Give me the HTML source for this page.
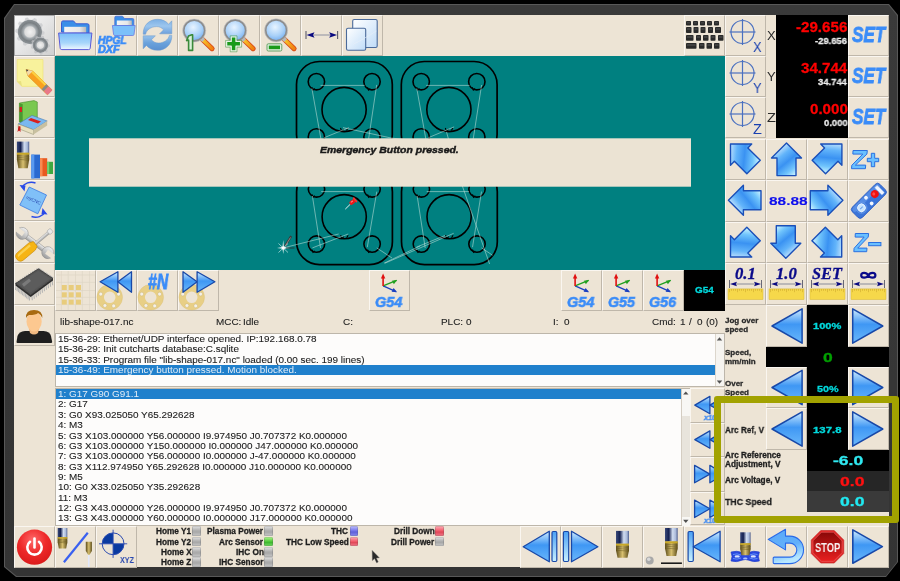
<!DOCTYPE html>
<html><head><meta charset="utf-8"><style>
html,body{margin:0;padding:0;width:900px;height:581px;overflow:hidden;background:#000;}
body{position:relative;font-family:"Liberation Sans",sans-serif;}
.a{position:absolute;}
.b{position:absolute;box-sizing:border-box;border-left:1px solid #faf6f0;border-top:1px solid #faf6f0;border-right:1px solid #bfb7aa;border-bottom:1px solid #bfb7aa;overflow:hidden;background:#ede4d5;}
.b svg{position:absolute;left:-1px;top:-1px;}
.t{position:absolute;white-space:nowrap;color:#222;line-height:1;will-change:transform;}
</style></head><body>
<div class="a" style="left:4px;top:4px;width:894px;height:573px;background:#585858;clip-path:polygon(10px 0,885px 0,894px 11px,894px 558px,882px 573px,12px 573px,0 563px,0 14px);"></div>
<div class="a" style="left:5px;top:5px;width:892px;height:571px;background:linear-gradient(#3a3a3a,#343434);clip-path:polygon(9.5px 0,883.5px 0,892px 10.5px,892px 557px,881px 571px,11.5px 571px,0 561.5px,0 13.5px);"></div>
<div class="a" style="left:14px;top:15px;width:875px;height:552px;background:#ede4d5;"></div>
<div class="b" style="left:14px;top:15px;width:41px;height:41px;background:linear-gradient(135deg,#fbfbfb,#d0d0d0);border-color:#a8a8a8;"></div>
<div class="b" style="left:55px;top:15px;width:41px;height:41px;"></div>
<div class="b" style="left:96px;top:15px;width:41px;height:41px;"></div>
<div class="b" style="left:137px;top:15px;width:41px;height:41px;"></div>
<div class="b" style="left:178px;top:15px;width:41px;height:41px;"></div>
<div class="b" style="left:219px;top:15px;width:41px;height:41px;"></div>
<div class="b" style="left:260px;top:15px;width:41px;height:41px;"></div>
<div class="b" style="left:301px;top:15px;width:41px;height:41px;"></div>
<div class="b" style="left:342px;top:15px;width:41px;height:41px;"></div>
<div class="b" style="left:684px;top:15px;width:41px;height:41px;"></div>
<div class="b" style="left:14px;top:56px;width:41px;height:41px;"></div>
<div class="b" style="left:14px;top:97px;width:41px;height:41px;"></div>
<div class="b" style="left:14px;top:138px;width:41px;height:42px;"></div>
<div class="b" style="left:14px;top:180px;width:41px;height:41px;"></div>
<div class="b" style="left:14px;top:221px;width:41px;height:42px;"></div>
<div class="b" style="left:14px;top:263px;width:41px;height:42px;"></div>
<div class="b" style="left:14px;top:305px;width:41px;height:41px;"></div>
<div class="a" style="left:55px;top:56px;width:670px;height:214px;background:#008080;overflow:hidden;"></div>
<div class="b" style="left:55px;top:270px;width:41px;height:41px;"></div>
<div class="b" style="left:96px;top:270px;width:41px;height:41px;"></div>
<div class="b" style="left:137px;top:270px;width:41px;height:41px;"></div>
<div class="b" style="left:178px;top:270px;width:41px;height:41px;"></div>
<div class="b" style="left:369px;top:270px;width:41px;height:41px;"></div>
<div class="b" style="left:561px;top:270px;width:41px;height:41px;"></div>
<div class="b" style="left:602px;top:270px;width:41px;height:41px;"></div>
<div class="b" style="left:643px;top:270px;width:41px;height:41px;"></div>
<div class="a" style="left:684px;top:270px;width:41px;height:41px;background:#000;"></div>
<div class="t" style="left:59.85px;top:318.01px;font-size:9.29px;font-weight:normal;font-style:normal;color:#222222;transform:scaleX(1.0690);transform-origin:0 0;-webkit-text-stroke:0.1px #222222;">lib-shape-017.nc</div>
<div class="t" style="left:216.01px;top:318.01px;font-size:9.29px;font-weight:normal;font-style:normal;color:#222222;transform:scaleX(1.0690);transform-origin:0 0;-webkit-text-stroke:0.1px #222222;">MCC:</div>
<div class="t" style="left:243.01px;top:318.01px;font-size:9.29px;font-weight:normal;font-style:normal;color:#222222;transform:scaleX(1.0690);transform-origin:0 0;-webkit-text-stroke:0.1px #222222;">Idle</div>
<div class="t" style="left:342.50px;top:318.01px;font-size:9.29px;font-weight:normal;font-style:normal;color:#222222;transform:scaleX(1.0690);transform-origin:0 0;-webkit-text-stroke:0.1px #222222;">C:</div>
<div class="t" style="left:441.41px;top:318.01px;font-size:9.29px;font-weight:normal;font-style:normal;color:#222222;transform:scaleX(1.0690);transform-origin:0 0;-webkit-text-stroke:0.1px #222222;">PLC:</div>
<div class="t" style="left:465.60px;top:318.01px;font-size:9.29px;font-weight:normal;font-style:normal;color:#222222;transform:scaleX(1.0690);transform-origin:0 0;-webkit-text-stroke:0.1px #222222;">0</div>
<div class="t" style="left:553.11px;top:318.01px;font-size:9.29px;font-weight:normal;font-style:normal;color:#222222;transform:scaleX(1.0690);transform-origin:0 0;-webkit-text-stroke:0.1px #222222;">I:</div>
<div class="t" style="left:564.00px;top:318.01px;font-size:9.29px;font-weight:normal;font-style:normal;color:#222222;transform:scaleX(1.0690);transform-origin:0 0;-webkit-text-stroke:0.1px #222222;">0</div>
<div class="t" style="left:652.00px;top:318.01px;font-size:9.29px;font-weight:normal;font-style:normal;color:#222222;transform:scaleX(1.0690);transform-origin:0 0;-webkit-text-stroke:0.1px #222222;">Cmd:</div>
<div class="t" style="left:679.76px;top:318.01px;font-size:9.29px;font-weight:normal;font-style:normal;color:#222222;transform:scaleX(1.0690);transform-origin:0 0;-webkit-text-stroke:0.1px #222222;">1</div>
<div class="t" style="left:689.00px;top:318.01px;font-size:9.29px;font-weight:normal;font-style:normal;color:#222222;transform:scaleX(1.0690);transform-origin:0 0;-webkit-text-stroke:0.1px #222222;">/</div>
<div class="t" style="left:696.60px;top:318.01px;font-size:9.29px;font-weight:normal;font-style:normal;color:#222222;transform:scaleX(1.0690);transform-origin:0 0;-webkit-text-stroke:0.1px #222222;">0</div>
<div class="t" style="left:705.90px;top:318.01px;font-size:9.29px;font-weight:normal;font-style:normal;color:#222222;transform:scaleX(1.0690);transform-origin:0 0;-webkit-text-stroke:0.1px #222222;">(0)</div>
<div class="a" style="left:55px;top:333px;width:670px;height:54px;background:#fdfcfb;box-sizing:border-box;border:1px solid #bdb6aa;"></div>
<div class="a" style="left:56px;top:364.7px;width:659px;height:10.2px;background:#2080cc;"></div>
<div class="t" style="left:57.86px;top:335.11px;font-size:9.29px;font-weight:normal;font-style:normal;color:#1c1c1c;transform:scaleX(1.0690);transform-origin:0 0;-webkit-text-stroke:0.1px #1c1c1c;">15-36-29: Ethernet/UDP interface opened. IP:192.168.0.78</div>
<div class="t" style="left:57.86px;top:345.36px;font-size:9.29px;font-weight:normal;font-style:normal;color:#1c1c1c;transform:scaleX(1.0690);transform-origin:0 0;-webkit-text-stroke:0.1px #1c1c1c;">15-36-29: Init cutcharts database:C.sqlite</div>
<div class="t" style="left:57.86px;top:355.61px;font-size:9.29px;font-weight:normal;font-style:normal;color:#1c1c1c;transform:scaleX(1.0690);transform-origin:0 0;-webkit-text-stroke:0.1px #1c1c1c;">15-36-33: Program file "lib-shape-017.nc" loaded (0.00 sec. 199 lines)</div>
<div class="t" style="left:57.86px;top:365.86px;font-size:9.29px;font-weight:normal;font-style:normal;color:#e2ecf6;transform:scaleX(1.0690);transform-origin:0 0;">15-36-49: Emergency button pressed. Motion blocked.</div>
<div class="a" style="left:715px;top:334px;width:9px;height:52px;background:#f6f4f0;box-sizing:border-box;border-left:1px solid #dcd6cc;"></div>
<div class="a" style="left:55px;top:388px;width:635px;height:138px;background:#fdfcfb;box-sizing:border-box;border:1px solid #bdb6aa;"></div>
<div class="a" style="left:56px;top:389px;width:625px;height:10px;background:#2080cc;"></div>
<div class="t" style="left:57.56px;top:390.11px;font-size:9.29px;font-weight:normal;font-style:normal;color:#e2ecf6;transform:scaleX(1.0690);transform-origin:0 0;">1: G17 G90 G91.1</div>
<div class="t" style="left:57.80px;top:400.46px;font-size:9.29px;font-weight:normal;font-style:normal;color:#1c1c1c;transform:scaleX(1.0690);transform-origin:0 0;-webkit-text-stroke:0.1px #1c1c1c;">2: G17</div>
<div class="t" style="left:57.90px;top:410.81px;font-size:9.29px;font-weight:normal;font-style:normal;color:#1c1c1c;transform:scaleX(1.0690);transform-origin:0 0;-webkit-text-stroke:0.1px #1c1c1c;">3: G0 X93.025050 Y65.292628</div>
<div class="t" style="left:58.10px;top:421.16px;font-size:9.29px;font-weight:normal;font-style:normal;color:#1c1c1c;transform:scaleX(1.0690);transform-origin:0 0;-webkit-text-stroke:0.1px #1c1c1c;">4: M3</div>
<div class="t" style="left:57.90px;top:431.51px;font-size:9.29px;font-weight:normal;font-style:normal;color:#1c1c1c;transform:scaleX(1.0690);transform-origin:0 0;-webkit-text-stroke:0.1px #1c1c1c;">5: G3 X103.000000 Y56.000000 I9.974950 J0.707372 K0.000000</div>
<div class="t" style="left:57.80px;top:441.86px;font-size:9.29px;font-weight:normal;font-style:normal;color:#1c1c1c;transform:scaleX(1.0690);transform-origin:0 0;-webkit-text-stroke:0.1px #1c1c1c;">6: G3 X103.000000 Y150.000000 I0.000000 J47.000000 K0.000000</div>
<div class="t" style="left:57.80px;top:452.21px;font-size:9.29px;font-weight:normal;font-style:normal;color:#1c1c1c;transform:scaleX(1.0690);transform-origin:0 0;-webkit-text-stroke:0.1px #1c1c1c;">7: G3 X103.000000 Y56.000000 I0.000000 J-47.000000 K0.000000</div>
<div class="t" style="left:57.85px;top:462.56px;font-size:9.29px;font-weight:normal;font-style:normal;color:#1c1c1c;transform:scaleX(1.0690);transform-origin:0 0;-webkit-text-stroke:0.1px #1c1c1c;">8: G3 X112.974950 Y65.292628 I0.000000 J10.000000 K0.000000</div>
<div class="t" style="left:57.85px;top:472.91px;font-size:9.29px;font-weight:normal;font-style:normal;color:#1c1c1c;transform:scaleX(1.0690);transform-origin:0 0;-webkit-text-stroke:0.1px #1c1c1c;">9: M5</div>
<div class="t" style="left:57.56px;top:483.26px;font-size:9.29px;font-weight:normal;font-style:normal;color:#1c1c1c;transform:scaleX(1.0690);transform-origin:0 0;-webkit-text-stroke:0.1px #1c1c1c;">10: G0 X33.025050 Y35.292628</div>
<div class="t" style="left:57.56px;top:493.61px;font-size:9.29px;font-weight:normal;font-style:normal;color:#1c1c1c;transform:scaleX(1.0690);transform-origin:0 0;-webkit-text-stroke:0.1px #1c1c1c;">11: M3</div>
<div class="t" style="left:57.56px;top:503.96px;font-size:9.29px;font-weight:normal;font-style:normal;color:#1c1c1c;transform:scaleX(1.0690);transform-origin:0 0;-webkit-text-stroke:0.1px #1c1c1c;">12: G3 X43.000000 Y26.000000 I9.974950 J0.707372 K0.000000</div>
<div class="t" style="left:57.56px;top:514.31px;font-size:9.29px;font-weight:normal;font-style:normal;color:#1c1c1c;transform:scaleX(1.0690);transform-origin:0 0;-webkit-text-stroke:0.1px #1c1c1c;">13: G3 X43.000000 Y60.000000 I0.000000 J17.000000 K0.000000</div>
<div class="a" style="left:681px;top:389px;width:9px;height:136px;background:#e8e4dc;box-sizing:border-box;border-left:1px solid #d4cdc2;"></div>
<div class="a" style="left:682px;top:389px;width:8px;height:27px;background:#f8f7f4;"></div>
<div class="a" style="left:682px;top:516.5px;width:8px;height:9px;background:#f8f7f4;"></div>
<div class="b" style="left:690px;top:388px;width:35px;height:34.5px;"></div>
<div class="b" style="left:690px;top:422.5px;width:35px;height:34.5px;"></div>
<div class="b" style="left:690px;top:457px;width:35px;height:34.69999999999999px;"></div>
<div class="b" style="left:690px;top:491.7px;width:35px;height:33.80000000000001px;"></div>
<div class="b" style="left:725px;top:15px;width:41px;height:41px;"></div>
<div class="b" style="left:848px;top:15px;width:41px;height:41px;"></div>
<div class="b" style="left:725px;top:56px;width:41px;height:41px;"></div>
<div class="b" style="left:848px;top:56px;width:41px;height:41px;"></div>
<div class="b" style="left:725px;top:97px;width:41px;height:41px;"></div>
<div class="b" style="left:848px;top:97px;width:41px;height:41px;"></div>
<div class="a" style="left:776px;top:15px;width:72px;height:123px;background:#000;"></div>
<div class="b" style="left:725px;top:138.5px;width:41px;height:41.5px;"></div>
<div class="b" style="left:766px;top:138.5px;width:41px;height:41.5px;"></div>
<div class="b" style="left:807px;top:138.5px;width:41px;height:41.5px;"></div>
<div class="b" style="left:848px;top:138.5px;width:41px;height:41.5px;"></div>
<div class="b" style="left:725px;top:180.0px;width:41px;height:41.5px;"></div>
<div class="b" style="left:766px;top:180.0px;width:41px;height:41.5px;"></div>
<div class="b" style="left:807px;top:180.0px;width:41px;height:41.5px;"></div>
<div class="b" style="left:848px;top:180.0px;width:41px;height:41.5px;"></div>
<div class="b" style="left:725px;top:221.5px;width:41px;height:41.5px;"></div>
<div class="b" style="left:766px;top:221.5px;width:41px;height:41.5px;"></div>
<div class="b" style="left:807px;top:221.5px;width:41px;height:41.5px;"></div>
<div class="b" style="left:848px;top:221.5px;width:41px;height:41.5px;"></div>
<div class="b" style="left:725px;top:263.0px;width:41px;height:41.5px;"></div>
<div class="b" style="left:766px;top:263.0px;width:41px;height:41.5px;"></div>
<div class="b" style="left:807px;top:263.0px;width:41px;height:41.5px;"></div>
<div class="b" style="left:848px;top:263.0px;width:41px;height:41.5px;"></div>
<div class="b" style="left:766px;top:305px;width:41px;height:42px;"></div>
<div class="a" style="left:807px;top:305px;width:41px;height:42px;background:#000;"></div>
<div class="b" style="left:848px;top:305px;width:41px;height:42px;"></div>
<div class="a" style="left:766px;top:347px;width:123px;height:20px;background:#000;"></div>
<div class="b" style="left:766px;top:367px;width:41px;height:41px;"></div>
<div class="a" style="left:807px;top:367px;width:41px;height:41px;background:#000;"></div>
<div class="b" style="left:848px;top:367px;width:41px;height:41px;"></div>
<div class="b" style="left:766px;top:408px;width:41px;height:42px;"></div>
<div class="a" style="left:807px;top:408px;width:41px;height:42px;background:#000;"></div>
<div class="b" style="left:848px;top:408px;width:41px;height:42px;"></div>
<div class="a" style="left:807px;top:450px;width:82px;height:21px;background:#000;"></div>
<div class="a" style="left:807px;top:471px;width:82px;height:20px;background:#262626;"></div>
<div class="a" style="left:807px;top:491px;width:82px;height:21px;background:#3a3a3a;"></div>
<div class="b" style="left:14px;top:526px;width:41px;height:42px;"></div>
<div class="b" style="left:55px;top:526px;width:41px;height:42px;"></div>
<div class="b" style="left:96px;top:526px;width:41px;height:42px;"></div>
<div class="b" style="left:520px;top:526px;width:41px;height:42px;"></div>
<div class="b" style="left:561px;top:526px;width:41px;height:42px;"></div>
<div class="b" style="left:602px;top:526px;width:41px;height:42px;"></div>
<div class="b" style="left:643px;top:526px;width:41px;height:42px;"></div>
<div class="b" style="left:684px;top:526px;width:41px;height:42px;"></div>
<div class="b" style="left:725px;top:526px;width:41px;height:42px;"></div>
<div class="b" style="left:766px;top:526px;width:41px;height:42px;"></div>
<div class="b" style="left:807px;top:526px;width:41px;height:42px;"></div>
<div class="b" style="left:848px;top:526px;width:41px;height:42px;"></div>
<svg class="a" style="left:0;top:0;pointer-events:none" width="900" height="581" viewBox="0 0 900 581"><defs>
<linearGradient id="gBlue" gradientUnits="userSpaceOnUse" x1="-11" y1="-12" x2="11" y2="15">
 <stop offset="0" stop-color="#f2faff"/><stop offset="0.32" stop-color="#62b4fa"/><stop offset="0.55" stop-color="#3a92f2"/><stop offset="0.8" stop-color="#70c4fc"/><stop offset="1" stop-color="#d0f6ff"/>
</linearGradient>
<linearGradient id="gTri" x1="0" y1="0" x2="0" y2="1">
 <stop offset="0" stop-color="#d0ecff"/><stop offset="0.45" stop-color="#3f97f4"/><stop offset="1" stop-color="#6ab8fb"/>
</linearGradient>
<linearGradient id="gUndo" x1="0" y1="0" x2="0.3" y2="1"><stop offset="0" stop-color="#5aa8f8"/><stop offset="0.6" stop-color="#62b0fa"/><stop offset="1" stop-color="#b8e8ff"/></linearGradient>
<linearGradient id="gBar" x1="0" y1="0" x2="0" y2="1">
 <stop offset="0" stop-color="#4aa0f4"/><stop offset="1" stop-color="#c8f0ff"/>
</linearGradient>
<linearGradient id="gFolder" x1="0" y1="0" x2="0" y2="1">
 <stop offset="0" stop-color="#78bdf8"/><stop offset="0.6" stop-color="#a8d6fb"/><stop offset="1" stop-color="#f0f8ff"/>
</linearGradient>
<linearGradient id="gPaper" x1="0" y1="0" x2="1" y2="0">
 <stop offset="0" stop-color="#f4f4f4"/><stop offset="0.7" stop-color="#e8e8e8"/><stop offset="1" stop-color="#b8b8b8"/>
</linearGradient>
<radialGradient id="gLens" cx="0.45" cy="0.35" r="0.7">
 <stop offset="0" stop-color="#e8f4ff"/><stop offset="0.6" stop-color="#a8d0f8"/><stop offset="1" stop-color="#6aa8f0"/>
</radialGradient>
<linearGradient id="gHandle" x1="0" y1="0" x2="1" y2="0">
 <stop offset="0" stop-color="#f8d030"/><stop offset="1" stop-color="#f08010"/>
</linearGradient>
<linearGradient id="gSteel" x1="0" y1="0" x2="1" y2="0">
 <stop offset="0" stop-color="#3a4a7a"/><stop offset="0.3" stop-color="#142050"/><stop offset="0.6" stop-color="#d0dcf0"/><stop offset="0.85" stop-color="#a8b8d8"/><stop offset="1" stop-color="#4a5a8a"/>
</linearGradient>
<linearGradient id="gBrass" x1="0" y1="0" x2="1" y2="0">
 <stop offset="0" stop-color="#5a4a18"/><stop offset="0.5" stop-color="#d8c070"/><stop offset="1" stop-color="#5a4a18"/>
</linearGradient>
<linearGradient id="gWin" x1="0" y1="0" x2="1" y2="1">
 <stop offset="0" stop-color="#ffffff"/><stop offset="1" stop-color="#c0dcf8"/>
</linearGradient>
<radialGradient id="gRed" cx="0.45" cy="0.3" r="0.75">
 <stop offset="0" stop-color="#ff6a6a"/><stop offset="0.5" stop-color="#ee2a2a"/><stop offset="1" stop-color="#d81818"/>
</radialGradient>
<linearGradient id="gStop" x1="0" y1="0" x2="0" y2="1">
 <stop offset="0" stop-color="#8a0808"/><stop offset="1" stop-color="#e82020"/>
</linearGradient>
<linearGradient id="gGear" x1="0" y1="0" x2="1" y2="1">
 <stop offset="0" stop-color="#fafafa"/><stop offset="1" stop-color="#cfcfcf"/>
</linearGradient>
<radialGradient id="gRing" cx="0.5" cy="0.5" r="0.5">
 <stop offset="0" stop-color="#f2f2f2"/><stop offset="0.42" stop-color="#dcdcdc"/><stop offset="0.52" stop-color="#a8aeb2"/><stop offset="0.75" stop-color="#7a8084"/><stop offset="0.95" stop-color="#8a9094"/><stop offset="1" stop-color="#b8bcc0"/>
</radialGradient>
<linearGradient id="gRefresh" x1="0" y1="0" x2="0" y2="1">
 <stop offset="0" stop-color="#7aaee4"/><stop offset="0.45" stop-color="#9cc6ee"/><stop offset="1" stop-color="#6a9edc"/>
</linearGradient>
<linearGradient id="gRefresh2" x1="0" y1="1" x2="0" y2="0">
 <stop offset="0" stop-color="#9ac4ec"/><stop offset="0.5" stop-color="#6aa2dc"/><stop offset="1" stop-color="#5a90d0"/>
</linearGradient>
<clipPath id="cvclip"><rect x="55" y="56" width="670" height="214"/></clipPath><clipPath id="x10clip"><rect x="690" y="380" width="26" height="150"/></clipPath></defs><path d="M44.50,31.90 L44.32,34.18 L41.31,35.61 L40.59,37.35 L41.71,40.48 L40.22,42.22 L36.95,41.61 L35.35,42.59 L34.41,45.79 L32.18,46.32 L29.90,43.90 L28.02,43.75 L25.39,45.79 L23.27,44.91 L22.85,41.61 L21.41,40.39 L18.09,40.48 L16.89,38.53 L18.49,35.61 L18.05,33.78 L15.30,31.90 L15.48,29.62 L18.49,28.19 L19.21,26.45 L18.09,23.32 L19.58,21.58 L22.85,22.19 L24.45,21.21 L25.39,18.01 L27.62,17.48 L29.90,19.90 L31.78,20.05 L34.41,18.01 L36.53,18.89 L36.95,22.19 L38.39,23.41 L41.71,23.32 L42.91,25.27 L41.31,28.19 L41.75,30.02 Z" fill="#c8cacc" opacity="0.75"/>
<circle cx="29.9" cy="31.9" r="12.2" fill="url(#gRing)"/>
<path d="M50.00,45.10 L49.85,46.77 L47.73,47.77 L47.15,49.00 L47.75,51.27 L46.57,52.45 L44.30,51.85 L43.07,52.43 L42.07,54.55 L40.40,54.70 L39.05,52.78 L37.73,52.43 L35.60,53.41 L34.23,52.45 L34.42,50.11 L33.65,49.00 L31.38,48.38 L30.95,46.77 L32.60,45.10 L32.72,43.75 L31.38,41.82 L32.09,40.30 L34.42,40.09 L35.39,39.12 L35.60,36.79 L37.12,36.08 L39.05,37.42 L40.40,37.30 L42.07,35.65 L43.68,36.08 L44.30,38.35 L45.41,39.12 L47.75,38.93 L48.71,40.30 L47.73,42.43 L48.08,43.75 Z" fill="#c0c2c4" opacity="0.75"/>
<circle cx="40.4" cy="45.1" r="7.8" fill="url(#gRing)"/>
<path d="M61.5,32 L61.5,22.5 Q61.5,20.9 63,20.9 L73.5,20.9 L76,23.8 L87.5,23.8 Q89,23.8 89,25.3 L89,33 Z" fill="#3a8ee8" stroke="#3a5ad0" stroke-width="1"/>
<rect x="64.2" y="26.8" width="22" height="5.8" fill="url(#gPaper)"/>
<path d="M58.6,33 L91.9,33 L90.2,48.3 Q90,49.6 88.6,49.6 L61.8,49.6 Q60.4,49.6 60.2,48.3 Z" fill="url(#gFolder)" stroke="#5a5ad8" stroke-width="1"/>
<path d="M114.8,26 L114.8,17.5 Q114.8,16.2 116,16.2 L122.5,16.2 L124.5,18.5 L132.5,18.5 Q133.8,18.5 133.8,19.8 L133.8,26 Z" fill="#3a8ee8" stroke="#4a6ad0" stroke-width="0.8"/>
<rect x="116.8" y="20.5" width="15" height="4.5" fill="url(#gPaper)"/>
<path d="M112.4,25.5 L135.2,25.5 L134,34.5 Q133.8,35.5 132.8,35.5 L114.8,35.5 Q113.8,35.5 113.6,34.5 Z" fill="#7cc0fa" stroke="#6a7ae0" stroke-width="0.8"/>
<path d="M143.2,34.2 C143,24.5 150,19.3 157.5,19.3 C162.5,19.3 166,21.2 168.6,24.2 L171.8,20.8 L171.8,33.8 L159.6,33.8 L163.6,29.8 C161.6,27.6 159.2,26.6 156.8,26.6 C151,26.6 146.6,29.8 145.6,34.2 Z" fill="url(#gRefresh)" stroke="#6a98cc" stroke-width="0.5" stroke-linejoin="round"/>
<g transform="rotate(180 157.5 34.8)"><path d="M143.2,34.2 C143,24.5 150,19.3 157.5,19.3 C162.5,19.3 166,21.2 168.6,24.2 L171.8,20.8 L171.8,33.8 L159.6,33.8 L163.6,29.8 C161.6,27.6 159.2,26.6 156.8,26.6 C151,26.6 146.6,29.8 145.6,34.2 Z" fill="url(#gRefresh2)" stroke="#6a98cc" stroke-width="0.5" stroke-linejoin="round"/></g>
<line x1="201.5" y1="38.5" x2="212" y2="48.6" stroke="#d84818" stroke-width="5.2" stroke-linecap="round"/>
<line x1="201.5" y1="38.5" x2="212" y2="48.6" stroke="url(#gHandle)" stroke-width="3.4" stroke-linecap="round"/>
<line x1="201.5" y1="38.5" x2="203.6" y2="40.52" stroke="#b8b8b8" stroke-width="4" />
<circle cx="194.2" cy="30.5" r="10.6" fill="url(#gLens)" stroke="#8c8c8c" stroke-width="2"/>
<circle cx="194.2" cy="30.5" r="11.6" fill="none" stroke="#d0d0d0" stroke-width="0.6"/>
<path d="M188.5,36 L191.8,34.8 L192.6,34.8 L192.6,50.4 L188.6,50.4 L188.6,40 L186.6,40.6 Z" fill="#d8f0d8" stroke="#3a8a3a" stroke-width="1.6" stroke-linejoin="round"/>
<line x1="242.5" y1="38.5" x2="253" y2="48.6" stroke="#d84818" stroke-width="5.2" stroke-linecap="round"/>
<line x1="242.5" y1="38.5" x2="253" y2="48.6" stroke="url(#gHandle)" stroke-width="3.4" stroke-linecap="round"/>
<line x1="242.5" y1="38.5" x2="244.6" y2="40.52" stroke="#b8b8b8" stroke-width="4" />
<circle cx="235.2" cy="30.5" r="10.6" fill="url(#gLens)" stroke="#8c8c8c" stroke-width="2"/>
<circle cx="235.2" cy="30.5" r="11.6" fill="none" stroke="#d0d0d0" stroke-width="0.6"/>
<path d="M231.2,36.8 h4.8 v4.6 h4.6 v4.8 h-4.6 v4.6 h-4.8 v-4.6 h-4.6 v-4.8 h4.6 Z" fill="#1a9a1a" stroke="#e8f4e8" stroke-width="1.3" stroke-linejoin="round"/>
<path d="M230.2,35.8 h6.8 v4.6 h4.6 v6.8 h-4.6 v4.6 h-6.8 v-4.6 h-4.6 v-6.8 h4.6 Z" fill="none" stroke="#4a9a4a" stroke-width="0.7" opacity="0.8"/>
<line x1="283.5" y1="38.5" x2="294" y2="48.6" stroke="#d84818" stroke-width="5.2" stroke-linecap="round"/>
<line x1="283.5" y1="38.5" x2="294" y2="48.6" stroke="url(#gHandle)" stroke-width="3.4" stroke-linecap="round"/>
<line x1="283.5" y1="38.5" x2="285.6" y2="40.52" stroke="#b8b8b8" stroke-width="4" />
<circle cx="276.1" cy="30.3" r="10.6" fill="url(#gLens)" stroke="#8c8c8c" stroke-width="2"/>
<circle cx="276.1" cy="30.3" r="11.6" fill="none" stroke="#d0d0d0" stroke-width="0.6"/>
<rect x="267" y="43.8" width="14.8" height="7.2" rx="1.3" fill="#e0f0e0" stroke="#5a9a5a" stroke-width="0.9"/>
<rect x="268.8" y="45.6" width="11.2" height="3.6" fill="#1a9a1a"/>
<line x1="306" y1="31" x2="306" y2="39" stroke="#5a5a6a" stroke-width="1.1"/>
<line x1="337.6" y1="31" x2="337.6" y2="39" stroke="#5a5a6a" stroke-width="1.1"/>
<line x1="310" y1="35" x2="334" y2="35" stroke="#a8a8b0" stroke-width="1.4"/>
<path d="M306.5,35 L314.5,32.3 L313,35 L314.5,37.7 Z" fill="#0a0a80"/>
<path d="M337.1,35 L329.1,32.3 L330.6,35 L329.1,37.7 Z" fill="#0a0a80"/>
<rect x="352.7" y="19.5" width="24.5" height="28" rx="1.5" fill="url(#gWin)" stroke="#4a6a9a" stroke-width="1.1"/>
<rect x="346.5" y="28.3" width="19.2" height="22" rx="1.5" fill="url(#gWin)" stroke="#4a6a9a" stroke-width="1.1"/>
<path d="M353.5,44 Q362,40 376.5,31" fill="none" stroke="#e8eef8" stroke-width="0.6"/>
<rect x="686" y="21" width="5" height="4.5" rx="0.8" fill="#2a2a2a"/>
<rect x="687" y="22" width="3" height="1.57" fill="#555" opacity="0.5"/>
<rect x="693" y="21" width="5" height="4.5" rx="0.8" fill="#2a2a2a"/>
<rect x="694" y="22" width="3" height="1.57" fill="#555" opacity="0.5"/>
<rect x="700" y="21" width="5" height="4.5" rx="0.8" fill="#2a2a2a"/>
<rect x="701" y="22" width="3" height="1.57" fill="#555" opacity="0.5"/>
<rect x="707" y="21" width="5" height="4.5" rx="0.8" fill="#2a2a2a"/>
<rect x="708" y="22" width="3" height="1.57" fill="#555" opacity="0.5"/>
<rect x="714" y="21" width="5" height="4.5" rx="0.8" fill="#2a2a2a"/>
<rect x="715" y="22" width="3" height="1.57" fill="#555" opacity="0.5"/>
<rect x="686" y="27" width="5.5" height="6" rx="0.8" fill="#2a2a2a"/>
<rect x="687" y="28" width="3.5" height="2.10" fill="#555" opacity="0.5"/>
<rect x="693.5" y="27" width="5.0" height="6" rx="0.8" fill="#2a2a2a"/>
<rect x="694.5" y="28" width="3.0" height="2.10" fill="#555" opacity="0.5"/>
<rect x="700.5" y="27" width="5.0" height="6" rx="0.8" fill="#2a2a2a"/>
<rect x="701.5" y="28" width="3.0" height="2.10" fill="#555" opacity="0.5"/>
<rect x="708" y="27" width="5" height="6" rx="0.8" fill="#2a2a2a"/>
<rect x="709" y="28" width="3" height="2.10" fill="#555" opacity="0.5"/>
<rect x="715" y="27" width="6" height="6" rx="0.8" fill="#2a2a2a"/>
<rect x="716" y="28" width="4" height="2.10" fill="#555" opacity="0.5"/>
<rect x="686" y="35" width="7.5" height="5.799999999999997" rx="0.8" fill="#2a2a2a"/>
<rect x="687" y="36" width="5.5" height="2.03" fill="#555" opacity="0.5"/>
<rect x="696" y="35" width="5" height="5.799999999999997" rx="0.8" fill="#2a2a2a"/>
<rect x="697" y="36" width="3" height="2.03" fill="#555" opacity="0.5"/>
<rect x="703" y="35" width="5.5" height="5.799999999999997" rx="0.8" fill="#2a2a2a"/>
<rect x="704" y="36" width="3.5" height="2.03" fill="#555" opacity="0.5"/>
<rect x="710.5" y="35" width="5.0" height="5.799999999999997" rx="0.8" fill="#2a2a2a"/>
<rect x="711.5" y="36" width="3.0" height="2.03" fill="#555" opacity="0.5"/>
<rect x="718" y="35" width="5.5" height="5.799999999999997" rx="0.8" fill="#2a2a2a"/>
<rect x="719" y="36" width="3.5" height="2.03" fill="#555" opacity="0.5"/>
<rect x="686" y="43" width="10.5" height="5.799999999999997" rx="0.8" fill="#2a2a2a"/>
<rect x="687" y="44" width="8.5" height="2.03" fill="#555" opacity="0.5"/>
<rect x="699" y="43" width="5.5" height="5.799999999999997" rx="0.8" fill="#2a2a2a"/>
<rect x="700" y="44" width="3.5" height="2.03" fill="#555" opacity="0.5"/>
<rect x="706.5" y="43" width="5.5" height="5.799999999999997" rx="0.8" fill="#2a2a2a"/>
<rect x="707.5" y="44" width="3.5" height="2.03" fill="#555" opacity="0.5"/>
<rect x="714" y="43" width="5.5" height="5.799999999999997" rx="0.8" fill="#2a2a2a"/>
<rect x="715" y="44" width="3.5" height="2.03" fill="#555" opacity="0.5"/>
<circle cx="742.5" cy="32" r="11.5" fill="none" stroke="#4a70c0" stroke-width="1.2"/>
<line x1="729.5" y1="32" x2="755.5" y2="32" stroke="#4a70c0" stroke-width="1.2"/>
<line x1="742.5" y1="19" x2="742.5" y2="45" stroke="#4a70c0" stroke-width="1.2"/>
<circle cx="742.5" cy="73" r="11.5" fill="none" stroke="#4a70c0" stroke-width="1.2"/>
<line x1="729.5" y1="73" x2="755.5" y2="73" stroke="#4a70c0" stroke-width="1.2"/>
<line x1="742.5" y1="60" x2="742.5" y2="86" stroke="#4a70c0" stroke-width="1.2"/>
<circle cx="742.5" cy="114" r="11.5" fill="none" stroke="#4a70c0" stroke-width="1.2"/>
<line x1="729.5" y1="114" x2="755.5" y2="114" stroke="#4a70c0" stroke-width="1.2"/>
<line x1="742.5" y1="101" x2="742.5" y2="127" stroke="#4a70c0" stroke-width="1.2"/>
<path d="M17.1,59.5 L43,59.5 L43,86.4 L22,86.4 L17.1,81.5 Z" fill="#f8f29c" stroke="#eee070" stroke-width="0.6"/>
<path d="M17.1,81.5 L22,86.4 L21,81 Z" fill="#e8e080"/>
<g transform="translate(26,69.4) rotate(44)"><path d="M0,0 L6,-3.4 L33,-3.4 L33,3.4 L6,3.4 Z" fill="#f8a020" stroke="#d88010" stroke-width="0.5"/><rect x="6" y="-3.4" width="19" height="2" fill="#fcd040"/><path d="M0,0 L6,-3.4 L6,3.4 Z" fill="#f0d8a8"/><path d="M0,0 L2.2,-1.2 L2.2,1.2 Z" fill="#333"/><rect x="25" y="-3.4" width="3" height="6.8" fill="#888"/><rect x="28" y="-3.4" width="5.5" height="6.8" rx="1.2" fill="#e87888"/></g>
<path d="M19.4,103 L34,100.6 L37.3,102 L37.3,121 L22.7,123.5 L19.4,122 Z" fill="#7ac850" stroke="#4a8a30" stroke-width="0.6"/>
<path d="M19.4,103 L22.7,104.3 L22.7,123.5 L19.4,122 Z" fill="#4a9a30"/>
<rect x="19.6" y="107" width="2.4" height="5" fill="#d82020"/>
<path d="M18.2,124 L32,115.4 L47.2,121 L33.5,129.8 Z" fill="#7ab8f0" stroke="#4a7ab0" stroke-width="0.6"/>
<path d="M18.2,124 L33.5,129.8 L33.5,134.5 L18.2,128.5 Z" fill="#e8e0c0" stroke="#8a8a6a" stroke-width="0.5"/>
<path d="M33.5,129.8 L47.2,121 L47.2,125.5 L33.5,134.5 Z" fill="#c8c0a0"/>
<path d="M31,118 L41,121.5 L38,123.5 L28,120 Z" fill="#d82020"/>
<path d="M18.5,126 L20.5,126.5 L20.5,132 L19,130.5 L17.5,132 Z" fill="#c81818"/>
<rect x="16.9" y="141.6" width="12.3" height="11.213999999999999" fill="url(#gSteel)"/>
<path d="M16.9,152.814 L29.2,152.814 L29.2,159.489 L27.724,168.3 L18.375999999999998,168.3 L16.9,159.489 Z" fill="url(#gBrass)"/>
<rect x="16.9" y="152.814" width="12.3" height="1.8690000000000013" fill="#c8a828"/>
<line x1="16.9" y1="155.48" x2="29.2" y2="156.48" stroke="#6a5a20" stroke-width="0.5"/>
<line x1="16.9" y1="157.35" x2="29.2" y2="158.35" stroke="#6a5a20" stroke-width="0.5"/>
<line x1="16.9" y1="159.22" x2="29.2" y2="160.22" stroke="#6a5a20" stroke-width="0.5"/>
<rect x="31.3" y="154.6" width="8.7" height="23.8" fill="#2a6ad0"/><rect x="31.3" y="154.6" width="3" height="23.8" fill="#5a9af0"/>
<rect x="40" y="158.2" width="7.2" height="18" fill="#e85a20"/><rect x="40" y="158.2" width="2.5" height="18" fill="#f88a50"/>
<rect x="47.2" y="161.8" width="5.8" height="12.2" fill="#40a840"/><rect x="47.2" y="161.8" width="2" height="12.2" fill="#70d070"/>
<path d="M29.2,187 L46.5,195 L37.8,213.8 L19.8,205 Z" fill="#80c0f8" stroke="#3a7ae0" stroke-width="0.8"/>
<text x="33" y="201.5" font-size="4.5" fill="#2a4ab0" font-family="Liberation Sans" transform="rotate(25 33 201)" text-anchor="middle">myCNC</text>
<path d="M22,187.5 A10,8 0 0 1 35.5,183" fill="none" stroke="#2a4ae8" stroke-width="1.5"/><path d="M19.5,185 L24.5,191.5 L25.5,185.5 Z" fill="#2a4ae8"/>
<path d="M45,212 A10,8 0 0 1 31.5,216.5" fill="none" stroke="#2a4ae8" stroke-width="1.5"/><path d="M47.5,214.5 L42.5,208 L41.5,214 Z" fill="#2a4ae8"/>
<defs><linearGradient id="gSilver" x1="0" y1="0" x2="0" y2="1"><stop offset="0" stop-color="#f0f0f0"/><stop offset="0.5" stop-color="#c8c8c8"/><stop offset="1" stop-color="#9a9a9a"/></linearGradient></defs>
<g transform="translate(35,243) rotate(37)"><rect x="-14" y="-2.3" width="28" height="4.6" fill="url(#gSilver)" stroke="#8a8a8a" stroke-width="0.5"/><circle cx="-16" cy="0" r="6" fill="url(#gSilver)" stroke="#8a8a8a" stroke-width="0.5"/><rect x="-23" y="-2.4" width="8.5" height="4.8" fill="#ede4d5"/><circle cx="16" cy="0" r="6" fill="url(#gSilver)" stroke="#8a8a8a" stroke-width="0.5"/><rect x="14.5" y="-2.4" width="8.5" height="4.8" fill="#ede4d5"/></g>
<g transform="translate(34.5,244.5) rotate(-40)"><rect x="0" y="-1.4" width="19" height="2.8" fill="url(#gSilver)" stroke="#8a8a8a" stroke-width="0.4"/><rect x="18" y="-2.4" width="4.5" height="4.8" rx="1.2" fill="#e8e8e8" stroke="#8a8a8a" stroke-width="0.4"/><path d="M1,-3 L-3,-4.8 L-18,-4.8 Q-23,-4.8 -23,0 Q-23,4.8 -18,4.8 L-3,4.8 L1,3 Z" fill="#f6b414" stroke="#c88808" stroke-width="0.6"/><path d="M-4,-3.2 L-17,-3.2 Q-20,-3.2 -20.5,-1 L-4,-1 Z" fill="#fbd860" opacity="0.8"/></g>
<line x1="16.5" y1="282.8" x2="15.7" y2="281.8" stroke="#b4b4b4" stroke-width="1.1"/>
<line x1="18.6" y1="281.5" x2="17.8" y2="280.5" stroke="#b4b4b4" stroke-width="1.1"/>
<line x1="20.7" y1="280.2" x2="19.9" y2="279.2" stroke="#b4b4b4" stroke-width="1.1"/>
<line x1="22.8" y1="278.8" x2="22.0" y2="277.8" stroke="#b4b4b4" stroke-width="1.1"/>
<line x1="24.9" y1="277.5" x2="24.1" y2="276.5" stroke="#b4b4b4" stroke-width="1.1"/>
<line x1="26.9" y1="276.1" x2="26.1" y2="275.1" stroke="#b4b4b4" stroke-width="1.1"/>
<line x1="29.0" y1="274.8" x2="28.2" y2="273.8" stroke="#b4b4b4" stroke-width="1.1"/>
<line x1="31.1" y1="273.5" x2="30.3" y2="272.5" stroke="#b4b4b4" stroke-width="1.1"/>
<line x1="33.2" y1="272.1" x2="32.4" y2="271.1" stroke="#b4b4b4" stroke-width="1.1"/>
<line x1="35.3" y1="270.8" x2="34.5" y2="269.8" stroke="#b4b4b4" stroke-width="1.1"/>
<line x1="37.4" y1="269.5" x2="36.6" y2="268.5" stroke="#b4b4b4" stroke-width="1.1"/>
<line x1="39.1" y1="269.2" x2="39.9" y2="268.2" stroke="#b4b4b4" stroke-width="1.1"/>
<line x1="40.4" y1="270.1" x2="41.2" y2="269.1" stroke="#b4b4b4" stroke-width="1.1"/>
<line x1="41.7" y1="271.0" x2="42.5" y2="270.0" stroke="#b4b4b4" stroke-width="1.1"/>
<line x1="43.0" y1="271.9" x2="43.8" y2="270.9" stroke="#b4b4b4" stroke-width="1.1"/>
<line x1="44.4" y1="272.8" x2="45.2" y2="271.8" stroke="#b4b4b4" stroke-width="1.1"/>
<line x1="45.7" y1="273.6" x2="46.5" y2="272.6" stroke="#b4b4b4" stroke-width="1.1"/>
<line x1="47.0" y1="274.5" x2="47.8" y2="273.5" stroke="#b4b4b4" stroke-width="1.1"/>
<line x1="48.4" y1="275.4" x2="49.2" y2="274.4" stroke="#b4b4b4" stroke-width="1.1"/>
<line x1="49.7" y1="276.3" x2="50.5" y2="275.3" stroke="#b4b4b4" stroke-width="1.1"/>
<line x1="51.0" y1="277.2" x2="51.8" y2="276.2" stroke="#b4b4b4" stroke-width="1.1"/>
<line x1="52.3" y1="278.1" x2="53.1" y2="277.1" stroke="#b4b4b4" stroke-width="1.1"/>
<line x1="52.0" y1="279.2" x2="52.6" y2="285.2" stroke="#b4b4b4" stroke-width="1.1"/>
<line x1="50.0" y1="280.8" x2="50.6" y2="286.8" stroke="#b4b4b4" stroke-width="1.1"/>
<line x1="47.9" y1="282.2" x2="48.5" y2="288.2" stroke="#b4b4b4" stroke-width="1.1"/>
<line x1="45.9" y1="283.8" x2="46.5" y2="289.8" stroke="#b4b4b4" stroke-width="1.1"/>
<line x1="43.9" y1="285.2" x2="44.5" y2="291.2" stroke="#b4b4b4" stroke-width="1.1"/>
<line x1="41.9" y1="286.8" x2="42.5" y2="292.8" stroke="#b4b4b4" stroke-width="1.1"/>
<line x1="39.8" y1="288.2" x2="40.4" y2="294.2" stroke="#b4b4b4" stroke-width="1.1"/>
<line x1="37.8" y1="289.8" x2="38.4" y2="295.8" stroke="#b4b4b4" stroke-width="1.1"/>
<line x1="35.8" y1="291.2" x2="36.4" y2="297.2" stroke="#b4b4b4" stroke-width="1.1"/>
<line x1="33.7" y1="292.8" x2="34.3" y2="298.8" stroke="#b4b4b4" stroke-width="1.1"/>
<line x1="31.7" y1="294.2" x2="32.3" y2="300.2" stroke="#b4b4b4" stroke-width="1.1"/>
<line x1="30.0" y1="294.5" x2="29.4" y2="300.5" stroke="#b4b4b4" stroke-width="1.1"/>
<line x1="28.6" y1="293.4" x2="28.0" y2="299.4" stroke="#b4b4b4" stroke-width="1.1"/>
<line x1="27.2" y1="292.4" x2="26.6" y2="298.4" stroke="#b4b4b4" stroke-width="1.1"/>
<line x1="25.9" y1="291.3" x2="25.3" y2="297.3" stroke="#b4b4b4" stroke-width="1.1"/>
<line x1="24.5" y1="290.3" x2="23.9" y2="296.3" stroke="#b4b4b4" stroke-width="1.1"/>
<line x1="23.1" y1="289.2" x2="22.5" y2="295.2" stroke="#b4b4b4" stroke-width="1.1"/>
<line x1="21.7" y1="288.2" x2="21.1" y2="294.2" stroke="#b4b4b4" stroke-width="1.1"/>
<line x1="20.3" y1="287.2" x2="19.7" y2="293.2" stroke="#b4b4b4" stroke-width="1.1"/>
<line x1="19.0" y1="286.1" x2="18.4" y2="292.1" stroke="#b4b4b4" stroke-width="1.1"/>
<line x1="17.6" y1="285.1" x2="17.0" y2="291.1" stroke="#b4b4b4" stroke-width="1.1"/>
<line x1="16.2" y1="284.0" x2="15.6" y2="290.0" stroke="#b4b4b4" stroke-width="1.1"/>
<path d="M38.4,268.8 L53,278.5 L30.7,295 L15.5,283.5 Z" fill="#555" stroke="#2a2a2a" stroke-width="0.7"/>
<path d="M15.5,283.5 L30.7,295 L53,278.5 L53,280.5 L30.7,297 L15.5,285.5 Z" fill="#2e2e2e"/>
<path d="M38.4,270.8 L50,278.5 L30.7,292.5 L18.5,283.5 Z" fill="#606060" opacity="0.6"/>
<rect x="22" y="281" width="9" height="3.2" fill="#7a7a7a" transform="rotate(-38 26.5 282.6)"/>
<path d="M16.5,342 L17.5,336 Q19,331.5 25,331 L43.5,331 Q50,331.5 51,336 L52.2,342 Q52.2,343 51,343 L17.5,343 Q16.5,343 16.5,342 Z" fill="#1e1e1e"/>
<path d="M29,329 L39,329 L38,333 Q34,336 30,333 Z" fill="#f0b880"/>
<ellipse cx="34.1" cy="321.5" rx="7.6" ry="10" fill="#fcc890"/>
<path d="M26,318 Q25.5,310 34,309.9 Q42.8,310 42.3,318 Q41,314.5 38,313 Q36,315 29,315 Q27,316 26,318 Z" fill="#a86a10"/>
<line x1="61.4" y1="271" x2="61.4" y2="310" stroke="#dcd3c2" stroke-width="0.6"/>
<line x1="68.2" y1="271" x2="68.2" y2="310" stroke="#dcd3c2" stroke-width="0.6"/>
<line x1="75.5" y1="271" x2="75.5" y2="310" stroke="#dcd3c2" stroke-width="0.6"/>
<line x1="82.3" y1="271" x2="82.3" y2="310" stroke="#dcd3c2" stroke-width="0.6"/>
<line x1="89.6" y1="271" x2="89.6" y2="310" stroke="#dcd3c2" stroke-width="0.6"/>
<line x1="56" y1="275" x2="95" y2="275" stroke="#dcd3c2" stroke-width="0.6"/>
<line x1="56" y1="282.3" x2="95" y2="282.3" stroke="#dcd3c2" stroke-width="0.6"/>
<line x1="56" y1="290.5" x2="95" y2="290.5" stroke="#dcd3c2" stroke-width="0.6"/>
<line x1="56" y1="297.3" x2="95" y2="297.3" stroke="#dcd3c2" stroke-width="0.6"/>
<line x1="56" y1="304.6" x2="95" y2="304.6" stroke="#dcd3c2" stroke-width="0.6"/>
<rect x="61.8" y="285" width="5" height="5" fill="#e8cc7c"/>
<rect x="61.8" y="292.3" width="5" height="5" fill="#e8cc7c"/>
<rect x="61.8" y="299.6" width="5" height="5" fill="#e8cc7c"/>
<rect x="68.7" y="285" width="5" height="5" fill="#e8cc7c"/>
<rect x="68.7" y="292.3" width="5" height="5" fill="#e8cc7c"/>
<rect x="68.7" y="299.6" width="5" height="5" fill="#e8cc7c"/>
<rect x="76" y="285" width="5" height="5" fill="#e8cc7c"/>
<rect x="76" y="292.3" width="5" height="5" fill="#e8cc7c"/>
<rect x="76" y="299.6" width="5" height="5" fill="#e8cc7c"/>
<circle cx="109.7" cy="297.3" r="9.3" fill="none" stroke="#e8cf86" stroke-width="7"/>
<circle cx="109.7" cy="297.3" r="12.8" fill="none" stroke="#d8bc70" stroke-width="0.6" opacity="0.6"/>
<circle cx="100.77" cy="294.05" r="1.9" fill="#f4f0e8" stroke="#c8b070" stroke-width="0.4"/>
<circle cx="118.63" cy="294.05" r="1.9" fill="#f4f0e8" stroke="#c8b070" stroke-width="0.4"/>
<circle cx="113.71" cy="305.91" r="1.9" fill="#f4f0e8" stroke="#c8b070" stroke-width="0.4"/>
<circle cx="104.95" cy="305.53" r="1.9" fill="#f4f0e8" stroke="#c8b070" stroke-width="0.4"/>
<circle cx="150.7" cy="297.3" r="9.3" fill="none" stroke="#e8cf86" stroke-width="7"/>
<circle cx="150.7" cy="297.3" r="12.8" fill="none" stroke="#d8bc70" stroke-width="0.6" opacity="0.6"/>
<circle cx="141.77" cy="294.05" r="1.9" fill="#f4f0e8" stroke="#c8b070" stroke-width="0.4"/>
<circle cx="159.63" cy="294.05" r="1.9" fill="#f4f0e8" stroke="#c8b070" stroke-width="0.4"/>
<circle cx="154.71" cy="305.91" r="1.9" fill="#f4f0e8" stroke="#c8b070" stroke-width="0.4"/>
<circle cx="145.95" cy="305.53" r="1.9" fill="#f4f0e8" stroke="#c8b070" stroke-width="0.4"/>
<circle cx="191.7" cy="297.3" r="9.3" fill="none" stroke="#e8cf86" stroke-width="7"/>
<circle cx="191.7" cy="297.3" r="12.8" fill="none" stroke="#d8bc70" stroke-width="0.6" opacity="0.6"/>
<circle cx="182.77" cy="294.05" r="1.9" fill="#f4f0e8" stroke="#c8b070" stroke-width="0.4"/>
<circle cx="200.63" cy="294.05" r="1.9" fill="#f4f0e8" stroke="#c8b070" stroke-width="0.4"/>
<circle cx="195.71" cy="305.91" r="1.9" fill="#f4f0e8" stroke="#c8b070" stroke-width="0.4"/>
<circle cx="186.95" cy="305.53" r="1.9" fill="#f4f0e8" stroke="#c8b070" stroke-width="0.4"/>
<path d="M100.1,281.8 L117.9,271.8 L117.9,292.3 Z" fill="url(#gTri)" stroke="#1848a8" stroke-width="1.3" stroke-linejoin="round"/>
<path d="M117.9,281.8 L131.5,271.8 L131.5,292.3 Z" fill="url(#gTri)" stroke="#1848a8" stroke-width="1.3" stroke-linejoin="round"/>
<path d="M197.1,281.8 L183,271.8 L183,292.3 Z" fill="url(#gTri)" stroke="#1848a8" stroke-width="1.3" stroke-linejoin="round"/>
<path d="M214.9,281.8 L197.1,271.8 L197.1,292.3 Z" fill="url(#gTri)" stroke="#1848a8" stroke-width="1.3" stroke-linejoin="round"/>
<line x1="383.1" y1="285.9" x2="396.1" y2="291.7" stroke="#1a40c0" stroke-width="1.3"/><path d="M397.1,292.2 L391.6,291.7 L393.6,288.09999999999997 Z" fill="#1a40c0"/>
<line x1="383.1" y1="285.9" x2="396.6" y2="280.29999999999995" stroke="#20a020" stroke-width="1.3"/><path d="M397.1,279.9 L393.90000000000003,284.29999999999995 L391.90000000000003,280.7 Z" fill="#20a020"/>
<line x1="383.1" y1="285.9" x2="383.1" y2="276.4" stroke="#e01010" stroke-width="1.6"/><path d="M383.1,273.4 L385.3,278.4 L380.90000000000003,278.4 Z" fill="#e01010"/>
<line x1="575.1" y1="285.9" x2="588.1" y2="291.7" stroke="#1a40c0" stroke-width="1.3"/><path d="M589.1,292.2 L583.6,291.7 L585.6,288.09999999999997 Z" fill="#1a40c0"/>
<line x1="575.1" y1="285.9" x2="588.6" y2="280.29999999999995" stroke="#20a020" stroke-width="1.3"/><path d="M589.1,279.9 L585.9,284.29999999999995 L583.9,280.7 Z" fill="#20a020"/>
<line x1="575.1" y1="285.9" x2="575.1" y2="276.4" stroke="#e01010" stroke-width="1.6"/><path d="M575.1,273.4 L577.3000000000001,278.4 L572.9,278.4 Z" fill="#e01010"/>
<line x1="616.1" y1="285.9" x2="629.1" y2="291.7" stroke="#1a40c0" stroke-width="1.3"/><path d="M630.1,292.2 L624.6,291.7 L626.6,288.09999999999997 Z" fill="#1a40c0"/>
<line x1="616.1" y1="285.9" x2="629.6" y2="280.29999999999995" stroke="#20a020" stroke-width="1.3"/><path d="M630.1,279.9 L626.9,284.29999999999995 L624.9,280.7 Z" fill="#20a020"/>
<line x1="616.1" y1="285.9" x2="616.1" y2="276.4" stroke="#e01010" stroke-width="1.6"/><path d="M616.1,273.4 L618.3000000000001,278.4 L613.9,278.4 Z" fill="#e01010"/>
<line x1="657.1" y1="285.9" x2="670.1" y2="291.7" stroke="#1a40c0" stroke-width="1.3"/><path d="M671.1,292.2 L665.6,291.7 L667.6,288.09999999999997 Z" fill="#1a40c0"/>
<line x1="657.1" y1="285.9" x2="670.6" y2="280.29999999999995" stroke="#20a020" stroke-width="1.3"/><path d="M671.1,279.9 L667.9,284.29999999999995 L665.9,280.7 Z" fill="#20a020"/>
<line x1="657.1" y1="285.9" x2="657.1" y2="276.4" stroke="#e01010" stroke-width="1.6"/><path d="M657.1,273.4 L659.3000000000001,278.4 L654.9,278.4 Z" fill="#e01010"/>
<g transform="translate(786.5,158.7) rotate(0)"><path d="M0.00,-15.70 L15.00,-0.70 L9.50,-0.70 L9.50,16.90 L-9.50,16.90 L-9.50,-0.70 L-15.00,-0.70 Z" fill="url(#gBlue)" stroke="#1a4fb8" stroke-width="1.4" stroke-linejoin="round"/></g>
<g transform="translate(741.6,155.1) rotate(-45)"><path d="M0.00,-15.70 L15.00,-0.70 L9.50,-0.70 L9.50,16.90 L-9.50,16.90 L-9.50,-0.70 L-15.00,-0.70 Z" fill="url(#gBlue)" stroke="#1a4fb8" stroke-width="1.4" stroke-linejoin="round"/></g>
<g transform="translate(830.8,155.1) rotate(45)"><path d="M0.00,-15.70 L15.00,-0.70 L9.50,-0.70 L9.50,16.90 L-9.50,16.90 L-9.50,-0.70 L-15.00,-0.70 Z" fill="url(#gBlue)" stroke="#1a4fb8" stroke-width="1.4" stroke-linejoin="round"/></g>
<g transform="translate(744.1,200.2) rotate(-90)"><path d="M0.00,-15.70 L15.00,-0.70 L9.50,-0.70 L9.50,16.90 L-9.50,16.90 L-9.50,-0.70 L-15.00,-0.70 Z" fill="url(#gBlue)" stroke="#1a4fb8" stroke-width="1.4" stroke-linejoin="round"/></g>
<g transform="translate(827.2,200.2) rotate(90)"><path d="M0.00,-15.70 L15.00,-0.70 L9.50,-0.70 L9.50,16.90 L-9.50,16.90 L-9.50,-0.70 L-15.00,-0.70 Z" fill="url(#gBlue)" stroke="#1a4fb8" stroke-width="1.4" stroke-linejoin="round"/></g>
<g transform="translate(785.8,242.6) rotate(180)"><path d="M0.00,-15.70 L15.00,-0.70 L9.50,-0.70 L9.50,16.90 L-9.50,16.90 L-9.50,-0.70 L-15.00,-0.70 Z" fill="url(#gBlue)" stroke="#1a4fb8" stroke-width="1.4" stroke-linejoin="round"/></g>
<g transform="translate(741.6,245.9) rotate(-135)"><path d="M0.00,-15.70 L15.00,-0.70 L9.50,-0.70 L9.50,16.90 L-9.50,16.90 L-9.50,-0.70 L-15.00,-0.70 Z" fill="url(#gBlue)" stroke="#1a4fb8" stroke-width="1.4" stroke-linejoin="round"/></g>
<g transform="translate(830.6,245.9) rotate(135)"><path d="M0.00,-15.70 L15.00,-0.70 L9.50,-0.70 L9.50,16.90 L-9.50,16.90 L-9.50,-0.70 L-15.00,-0.70 Z" fill="url(#gBlue)" stroke="#1a4fb8" stroke-width="1.4" stroke-linejoin="round"/></g>
<path d="M853.00,150.50 L867.35,150.50 L866.90,154.10 L855.40,165.10 L865.70,165.10 L865.40,168.70 L851.50,168.70 L851.80,165.30 L862.79,154.10 L852.85,154.10 Z" fill="#6ac0ff" stroke="#2a70e0" stroke-width="1" stroke-linejoin="round"/>
<path d="M871.3,153.3 h3.4 v5 h4 v3.4 h-4 v5 h-3.4 v-5 h-4 v-3.4 h4 Z" fill="#6ac0ff" stroke="#2a70e0" stroke-width="1" stroke-linejoin="round"/>
<path d="M855.30,233.50 L868.65,233.50 L868.20,237.10 L857.70,248.10 L867.00,248.10 L866.70,251.70 L853.80,251.70 L854.10,248.30 L864.09,237.10 L855.15,237.10 Z" fill="#6ac0ff" stroke="#2a70e0" stroke-width="1" stroke-linejoin="round"/>
<rect x="868.7" y="242.5" width="12.2" height="3.2" fill="#6ac0ff" stroke="#2a70e0" stroke-width="1"/>
<g transform="translate(868.9,200.8) rotate(-45)"><rect x="-19.5" y="-7.2" width="39" height="14.4" rx="3.5" fill="#3a74d8" stroke="#2a5ac0" stroke-width="0.8"/><rect x="-18.5" y="-6.4" width="37" height="5" rx="2.5" fill="#6aa0f0" opacity="0.55"/><rect x="13.2" y="-5.2" width="3.6" height="10.4" rx="0.8" fill="#f0f6ff" stroke="#9ab8e8" stroke-width="0.6"/><circle cx="8.9" cy="-0.6" r="3.9" fill="#f01010"/><circle cx="8.3" cy="-1.4" r="1.5" fill="#ff4a4a"/><circle cx="0.1" cy="-4.2" r="1.9" fill="#f4f8ff"/><circle cx="0.1" cy="3.8" r="1.9" fill="#f4f8ff"/><circle cx="-10.2" cy="-0.3" r="5.6" fill="#4a84e0" stroke="#6a9ae8" stroke-width="0.6"/><circle cx="-10.2" cy="-0.3" r="3.9" fill="#c8e4ff" stroke="#f0f8ff" stroke-width="0.8"/><line x1="-12" y1="-0.3" x2="-8.4" y2="-0.3" stroke="#6aa0e8" stroke-width="1"/></g>
<rect x="728" y="288.9" width="35" height="10.7" fill="#f6d84a" stroke="#d8b838" stroke-width="0.5"/>
<line x1="729.5" y1="289" x2="729.5" y2="292.2" stroke="#c8a028" stroke-width="0.5"/>
<line x1="731.5" y1="289" x2="731.5" y2="290.8" stroke="#c8a028" stroke-width="0.5"/>
<line x1="733.5" y1="289" x2="733.5" y2="290.8" stroke="#c8a028" stroke-width="0.5"/>
<line x1="735.5" y1="289" x2="735.5" y2="290.8" stroke="#c8a028" stroke-width="0.5"/>
<line x1="737.5" y1="289" x2="737.5" y2="292.2" stroke="#c8a028" stroke-width="0.5"/>
<line x1="739.5" y1="289" x2="739.5" y2="290.8" stroke="#c8a028" stroke-width="0.5"/>
<line x1="741.5" y1="289" x2="741.5" y2="290.8" stroke="#c8a028" stroke-width="0.5"/>
<line x1="743.5" y1="289" x2="743.5" y2="290.8" stroke="#c8a028" stroke-width="0.5"/>
<line x1="745.5" y1="289" x2="745.5" y2="292.2" stroke="#c8a028" stroke-width="0.5"/>
<line x1="747.5" y1="289" x2="747.5" y2="290.8" stroke="#c8a028" stroke-width="0.5"/>
<line x1="749.5" y1="289" x2="749.5" y2="290.8" stroke="#c8a028" stroke-width="0.5"/>
<line x1="751.5" y1="289" x2="751.5" y2="290.8" stroke="#c8a028" stroke-width="0.5"/>
<line x1="753.5" y1="289" x2="753.5" y2="292.2" stroke="#c8a028" stroke-width="0.5"/>
<line x1="755.5" y1="289" x2="755.5" y2="290.8" stroke="#c8a028" stroke-width="0.5"/>
<line x1="757.5" y1="289" x2="757.5" y2="290.8" stroke="#c8a028" stroke-width="0.5"/>
<line x1="759.5" y1="289" x2="759.5" y2="290.8" stroke="#c8a028" stroke-width="0.5"/>
<line x1="761.5" y1="289" x2="761.5" y2="292.2" stroke="#c8a028" stroke-width="0.5"/>
<line x1="729.5" y1="280" x2="729.5" y2="288" stroke="#5a5a6a" stroke-width="0.9"/><line x1="761.5" y1="280" x2="761.5" y2="288" stroke="#5a5a6a" stroke-width="0.9"/>
<line x1="733" y1="284" x2="758" y2="284" stroke="#a0a0a8" stroke-width="1.3"/>
<path d="M730,284 L737,281.8 L735.8,284 L737,286.2 Z" fill="#0a0a80"/><path d="M761,284 L754,281.8 L755.2,284 L754,286.2 Z" fill="#0a0a80"/>
<rect x="769" y="288.9" width="35" height="10.7" fill="#f6d84a" stroke="#d8b838" stroke-width="0.5"/>
<line x1="770.5" y1="289" x2="770.5" y2="292.2" stroke="#c8a028" stroke-width="0.5"/>
<line x1="772.5" y1="289" x2="772.5" y2="290.8" stroke="#c8a028" stroke-width="0.5"/>
<line x1="774.5" y1="289" x2="774.5" y2="290.8" stroke="#c8a028" stroke-width="0.5"/>
<line x1="776.5" y1="289" x2="776.5" y2="290.8" stroke="#c8a028" stroke-width="0.5"/>
<line x1="778.5" y1="289" x2="778.5" y2="292.2" stroke="#c8a028" stroke-width="0.5"/>
<line x1="780.5" y1="289" x2="780.5" y2="290.8" stroke="#c8a028" stroke-width="0.5"/>
<line x1="782.5" y1="289" x2="782.5" y2="290.8" stroke="#c8a028" stroke-width="0.5"/>
<line x1="784.5" y1="289" x2="784.5" y2="290.8" stroke="#c8a028" stroke-width="0.5"/>
<line x1="786.5" y1="289" x2="786.5" y2="292.2" stroke="#c8a028" stroke-width="0.5"/>
<line x1="788.5" y1="289" x2="788.5" y2="290.8" stroke="#c8a028" stroke-width="0.5"/>
<line x1="790.5" y1="289" x2="790.5" y2="290.8" stroke="#c8a028" stroke-width="0.5"/>
<line x1="792.5" y1="289" x2="792.5" y2="290.8" stroke="#c8a028" stroke-width="0.5"/>
<line x1="794.5" y1="289" x2="794.5" y2="292.2" stroke="#c8a028" stroke-width="0.5"/>
<line x1="796.5" y1="289" x2="796.5" y2="290.8" stroke="#c8a028" stroke-width="0.5"/>
<line x1="798.5" y1="289" x2="798.5" y2="290.8" stroke="#c8a028" stroke-width="0.5"/>
<line x1="800.5" y1="289" x2="800.5" y2="290.8" stroke="#c8a028" stroke-width="0.5"/>
<line x1="802.5" y1="289" x2="802.5" y2="292.2" stroke="#c8a028" stroke-width="0.5"/>
<line x1="770.5" y1="280" x2="770.5" y2="288" stroke="#5a5a6a" stroke-width="0.9"/><line x1="802.5" y1="280" x2="802.5" y2="288" stroke="#5a5a6a" stroke-width="0.9"/>
<line x1="774" y1="284" x2="799" y2="284" stroke="#a0a0a8" stroke-width="1.3"/>
<path d="M771,284 L778,281.8 L776.8,284 L778,286.2 Z" fill="#0a0a80"/><path d="M802,284 L795,281.8 L796.2,284 L795,286.2 Z" fill="#0a0a80"/>
<rect x="810" y="288.9" width="35" height="10.7" fill="#f6d84a" stroke="#d8b838" stroke-width="0.5"/>
<line x1="811.5" y1="289" x2="811.5" y2="292.2" stroke="#c8a028" stroke-width="0.5"/>
<line x1="813.5" y1="289" x2="813.5" y2="290.8" stroke="#c8a028" stroke-width="0.5"/>
<line x1="815.5" y1="289" x2="815.5" y2="290.8" stroke="#c8a028" stroke-width="0.5"/>
<line x1="817.5" y1="289" x2="817.5" y2="290.8" stroke="#c8a028" stroke-width="0.5"/>
<line x1="819.5" y1="289" x2="819.5" y2="292.2" stroke="#c8a028" stroke-width="0.5"/>
<line x1="821.5" y1="289" x2="821.5" y2="290.8" stroke="#c8a028" stroke-width="0.5"/>
<line x1="823.5" y1="289" x2="823.5" y2="290.8" stroke="#c8a028" stroke-width="0.5"/>
<line x1="825.5" y1="289" x2="825.5" y2="290.8" stroke="#c8a028" stroke-width="0.5"/>
<line x1="827.5" y1="289" x2="827.5" y2="292.2" stroke="#c8a028" stroke-width="0.5"/>
<line x1="829.5" y1="289" x2="829.5" y2="290.8" stroke="#c8a028" stroke-width="0.5"/>
<line x1="831.5" y1="289" x2="831.5" y2="290.8" stroke="#c8a028" stroke-width="0.5"/>
<line x1="833.5" y1="289" x2="833.5" y2="290.8" stroke="#c8a028" stroke-width="0.5"/>
<line x1="835.5" y1="289" x2="835.5" y2="292.2" stroke="#c8a028" stroke-width="0.5"/>
<line x1="837.5" y1="289" x2="837.5" y2="290.8" stroke="#c8a028" stroke-width="0.5"/>
<line x1="839.5" y1="289" x2="839.5" y2="290.8" stroke="#c8a028" stroke-width="0.5"/>
<line x1="841.5" y1="289" x2="841.5" y2="290.8" stroke="#c8a028" stroke-width="0.5"/>
<line x1="843.5" y1="289" x2="843.5" y2="292.2" stroke="#c8a028" stroke-width="0.5"/>
<line x1="811.5" y1="280" x2="811.5" y2="288" stroke="#5a5a6a" stroke-width="0.9"/><line x1="843.5" y1="280" x2="843.5" y2="288" stroke="#5a5a6a" stroke-width="0.9"/>
<line x1="815" y1="284" x2="840" y2="284" stroke="#a0a0a8" stroke-width="1.3"/>
<path d="M812,284 L819,281.8 L817.8,284 L819,286.2 Z" fill="#0a0a80"/><path d="M843,284 L836,281.8 L837.2,284 L836,286.2 Z" fill="#0a0a80"/>
<rect x="851" y="288.9" width="35" height="10.7" fill="#f6d84a" stroke="#d8b838" stroke-width="0.5"/>
<line x1="852.5" y1="289" x2="852.5" y2="292.2" stroke="#c8a028" stroke-width="0.5"/>
<line x1="854.5" y1="289" x2="854.5" y2="290.8" stroke="#c8a028" stroke-width="0.5"/>
<line x1="856.5" y1="289" x2="856.5" y2="290.8" stroke="#c8a028" stroke-width="0.5"/>
<line x1="858.5" y1="289" x2="858.5" y2="290.8" stroke="#c8a028" stroke-width="0.5"/>
<line x1="860.5" y1="289" x2="860.5" y2="292.2" stroke="#c8a028" stroke-width="0.5"/>
<line x1="862.5" y1="289" x2="862.5" y2="290.8" stroke="#c8a028" stroke-width="0.5"/>
<line x1="864.5" y1="289" x2="864.5" y2="290.8" stroke="#c8a028" stroke-width="0.5"/>
<line x1="866.5" y1="289" x2="866.5" y2="290.8" stroke="#c8a028" stroke-width="0.5"/>
<line x1="868.5" y1="289" x2="868.5" y2="292.2" stroke="#c8a028" stroke-width="0.5"/>
<line x1="870.5" y1="289" x2="870.5" y2="290.8" stroke="#c8a028" stroke-width="0.5"/>
<line x1="872.5" y1="289" x2="872.5" y2="290.8" stroke="#c8a028" stroke-width="0.5"/>
<line x1="874.5" y1="289" x2="874.5" y2="290.8" stroke="#c8a028" stroke-width="0.5"/>
<line x1="876.5" y1="289" x2="876.5" y2="292.2" stroke="#c8a028" stroke-width="0.5"/>
<line x1="878.5" y1="289" x2="878.5" y2="290.8" stroke="#c8a028" stroke-width="0.5"/>
<line x1="880.5" y1="289" x2="880.5" y2="290.8" stroke="#c8a028" stroke-width="0.5"/>
<line x1="882.5" y1="289" x2="882.5" y2="290.8" stroke="#c8a028" stroke-width="0.5"/>
<line x1="884.5" y1="289" x2="884.5" y2="292.2" stroke="#c8a028" stroke-width="0.5"/>
<line x1="852.5" y1="280" x2="852.5" y2="288" stroke="#5a5a6a" stroke-width="0.9"/><line x1="884.5" y1="280" x2="884.5" y2="288" stroke="#5a5a6a" stroke-width="0.9"/>
<line x1="856" y1="284" x2="881" y2="284" stroke="#a0a0a8" stroke-width="1.3"/>
<path d="M853,284 L860,281.8 L858.8,284 L860,286.2 Z" fill="#0a0a80"/><path d="M884,284 L877,281.8 L878.2,284 L877,286.2 Z" fill="#0a0a80"/>
<path d="M772,326.0 L802.1,308.8 L802.1,343.2 Z" fill="url(#gTri)" stroke="#1848a8" stroke-width="1.5" stroke-linejoin="round"/>
<path d="M882.8,326.0 L852.7,308.8 L852.7,343.2 Z" fill="url(#gTri)" stroke="#1848a8" stroke-width="1.5" stroke-linejoin="round"/>
<path d="M772,387.5 L802.1,370.3 L802.1,404.7 Z" fill="url(#gTri)" stroke="#1848a8" stroke-width="1.5" stroke-linejoin="round"/>
<path d="M882.8,387.5 L852.7,370.3 L852.7,404.7 Z" fill="url(#gTri)" stroke="#1848a8" stroke-width="1.5" stroke-linejoin="round"/>
<path d="M772,429.0 L802.1,411.8 L802.1,446.2 Z" fill="url(#gTri)" stroke="#1848a8" stroke-width="1.5" stroke-linejoin="round"/>
<path d="M882.8,429.0 L852.7,411.8 L852.7,446.2 Z" fill="url(#gTri)" stroke="#1848a8" stroke-width="1.5" stroke-linejoin="round"/>
<g clip-path="url(#x10clip)">
<path d="M694.8,405.1 L709.9,396.40000000000003 L709.9,413.8 Z" fill="url(#gTri)" stroke="#1848a8" stroke-width="1.3" stroke-linejoin="round"/>
<path d="M709.9,405.1 L725,396.40000000000003 L725,413.8 Z" fill="url(#gTri)" stroke="#1848a8" stroke-width="1.3" stroke-linejoin="round"/>
<path d="M694.8,439.6 L709.9,430.90000000000003 L709.9,448.3 Z" fill="url(#gTri)" stroke="#1848a8" stroke-width="1.3" stroke-linejoin="round"/>
<path d="M709.9,439.6 L725,430.90000000000003 L725,448.3 Z" fill="url(#gTri)" stroke="#1848a8" stroke-width="1.3" stroke-linejoin="round"/>
<path d="M709.9,474.1 L694.6,465.40000000000003 L694.6,482.8 Z" fill="url(#gTri)" stroke="#1848a8" stroke-width="1.3" stroke-linejoin="round"/>
<path d="M725,474.1 L709.9,465.40000000000003 L709.9,482.8 Z" fill="url(#gTri)" stroke="#1848a8" stroke-width="1.3" stroke-linejoin="round"/>
<path d="M709.9,508.8 L694.6,500.1 L694.6,517.5 Z" fill="url(#gTri)" stroke="#1848a8" stroke-width="1.3" stroke-linejoin="round"/>
<path d="M725,508.8 L709.9,500.1 L709.9,517.5 Z" fill="url(#gTri)" stroke="#1848a8" stroke-width="1.3" stroke-linejoin="round"/>
</g>
<path d="M716.8,340.5 L722.2,340.5 L719.5,337.3 Z" fill="#505050"/>
<path d="M716.8,380.5 L722.2,380.5 L719.5,383.7 Z" fill="#505050"/>
<path d="M683.1,394.6 L688.5,394.6 L685.8,391.4 Z" fill="#505050"/>
<path d="M683.1,519.8 L688.5,519.8 L685.8,523 Z" fill="#505050"/>
<circle cx="34.5" cy="547.2" r="17.6" fill="url(#gRed)"/>
<path d="M30,541.8 A7.2,7.2 0 1 0 39,541.8" fill="none" stroke="#fff" stroke-width="2.6" stroke-linecap="round"/>
<line x1="34.5" y1="538.5" x2="34.5" y2="547.5" stroke="#fff" stroke-width="2.6" stroke-linecap="round"/>
<rect x="57.7" y="528" width="9.599999999999994" height="9.225000000000023" fill="url(#gSteel)"/>
<path d="M57.7,537.225 L67.3,537.225 L67.3,542.35 L66.148,548.5 L58.852000000000004,548.5 L57.7,542.35 Z" fill="url(#gBrass)"/>
<rect x="57.7" y="537.225" width="9.599999999999994" height="1.435" fill="#c8a828"/>
<line x1="57.7" y1="539.27" x2="67.3" y2="540.27" stroke="#6a5a20" stroke-width="0.5"/>
<line x1="57.7" y1="540.71" x2="67.3" y2="541.71" stroke="#6a5a20" stroke-width="0.5"/>
<line x1="57.7" y1="542.14" x2="67.3" y2="543.14" stroke="#6a5a20" stroke-width="0.5"/>
<line x1="87.8" y1="532.8" x2="63.9" y2="562.2" stroke="#3a60f0" stroke-width="2.2"/>
<path d="M85.8,541.7 L91.9,541.7 L91.9,551 L89.5,554.7 L88.2,554.7 L85.8,551 Z" fill="url(#gBrass)"/>
<line x1="88.8" y1="555" x2="88.8" y2="567" stroke="#e0e8ff" stroke-width="1.4"/>
<path d="M113.1,543.8 L113.1,532.9 A10.9,10.9 0 0 0 102.2,543.8 Z" fill="#0a3aa0"/><path d="M113.1,543.8 L113.1,554.7 A10.9,10.9 0 0 0 124,543.8 Z" fill="#0a3aa0"/>
<circle cx="113.1" cy="543.8" r="10.9" fill="none" stroke="#2a4ab0" stroke-width="1"/><line x1="99" y1="543.8" x2="127.2" y2="543.8" stroke="#2a4ab0" stroke-width="0.9"/><line x1="113.1" y1="529.7" x2="113.1" y2="557.9" stroke="#2a4ab0" stroke-width="0.9"/>
<path d="M523.2,546.8 L549.3,531.3 L549.3,561.8 Z" fill="url(#gTri)" stroke="#1848a8" stroke-width="1.3" stroke-linejoin="round"/>
<rect x="552" y="531.5" width="4.7999999999999545" height="30.0" rx="1.2" fill="url(#gBar)" stroke="#1848a8" stroke-width="1.2"/>
<rect x="563.4" y="531.5" width="5.300000000000068" height="30.0" rx="1.2" fill="url(#gBar)" stroke="#1848a8" stroke-width="1.2"/>
<path d="M597.9,546.8 L571.5,531.3 L571.5,561.8 Z" fill="url(#gTri)" stroke="#1848a8" stroke-width="1.3" stroke-linejoin="round"/>
<rect x="616" y="530.9" width="13" height="12.864000000000033" fill="url(#gSteel)"/>
<path d="M616,543.764 L629,543.764 L629,550.464 L627.44,557.7 L617.56,557.7 L616,550.464 Z" fill="url(#gBrass)"/>
<rect x="616" y="543.764" width="13" height="1.876000000000005" fill="#c8a828"/>
<line x1="616" y1="546.44" x2="629" y2="547.44" stroke="#6a5a20" stroke-width="0.5"/>
<line x1="616" y1="548.32" x2="629" y2="549.32" stroke="#6a5a20" stroke-width="0.5"/>
<line x1="616" y1="550.20" x2="629" y2="551.20" stroke="#6a5a20" stroke-width="0.5"/>
<rect x="665" y="528" width="12.700000000000045" height="13.391999999999939" fill="url(#gSteel)"/>
<path d="M665,541.3919999999999 L677.7,541.3919999999999 L677.7,548.367 L676.176,555.9 L666.524,555.9 L665,548.367 Z" fill="url(#gBrass)"/>
<rect x="665" y="541.3919999999999" width="12.700000000000045" height="1.9529999999999985" fill="#c8a828"/>
<line x1="665" y1="544.18" x2="677.7" y2="545.18" stroke="#6a5a20" stroke-width="0.5"/>
<line x1="665" y1="546.13" x2="677.7" y2="547.13" stroke="#6a5a20" stroke-width="0.5"/>
<line x1="665" y1="548.09" x2="677.7" y2="549.09" stroke="#6a5a20" stroke-width="0.5"/>
<circle cx="649.7" cy="560.4" r="4" fill="#a8a8a8"/><circle cx="648.8" cy="559.2" r="1.8" fill="#d8d8d8"/>
<line x1="661" y1="563.2" x2="681.9" y2="563.2" stroke="#1a1a1a" stroke-width="1.6"/>
<rect x="688.1" y="531.5" width="5.199999999999932" height="30.0" rx="1.2" fill="url(#gBar)" stroke="#1848a8" stroke-width="1.2"/>
<path d="M693.3,546.8 L720.1,531.3 L720.1,561.8 Z" fill="url(#gTri)" stroke="#1848a8" stroke-width="1.3" stroke-linejoin="round"/>
<path d="M731,552 Q737,550.2 742,552.6 Q745.3,554 748.6,552.6 Q753.5,550.2 759.4,552 L758.4,556.4 L759.4,561 Q753.5,562.6 748.6,560.2 Q745.3,558.8 742,560.2 Q737,562.6 731,561 L732,556.4 Z" fill="#2a48e0" stroke="#1a38c8" stroke-width="0.6"/>
<path d="M733,554.5 Q737,553 741,555 M749.5,555 Q753.5,553 757.5,554.5 M733,558.5 Q737,560 741,558 M749.5,558 Q753.5,560 757.5,558.5" fill="none" stroke="#6a9af8" stroke-width="0.9"/>
<ellipse cx="737.2" cy="556.4" rx="2.6" ry="1.2" fill="#d8e4ff"/><ellipse cx="753.3" cy="556.4" rx="2.6" ry="1.2" fill="#d8e4ff"/><ellipse cx="745.3" cy="558.4" rx="2.2" ry="0.9" fill="#a8c0ff"/>
<rect x="740.2" y="532.3" width="10.399999999999977" height="10.992000000000075" fill="url(#gSteel)"/>
<path d="M740.2,543.292 L750.6,543.292 L750.6,549.017 L749.352,555.2 L741.4480000000001,555.2 L740.2,549.017 Z" fill="url(#gBrass)"/>
<rect x="740.2" y="543.292" width="10.399999999999977" height="1.6030000000000064" fill="#c8a828"/>
<line x1="740.2" y1="545.58" x2="750.6" y2="546.58" stroke="#6a5a20" stroke-width="0.5"/>
<line x1="740.2" y1="547.18" x2="750.6" y2="548.18" stroke="#6a5a20" stroke-width="0.5"/>
<line x1="740.2" y1="548.79" x2="750.6" y2="549.79" stroke="#6a5a20" stroke-width="0.5"/>
<path d="M768.2,539.4 L785.5,529.3 L785.5,536.1 L789.8,536.1 A13.75,13.75 0 0 1 789.8,563.6 L774.2,563.6 Q773.2,563.6 773.2,562.6 L773.2,558.1 Q773.2,557.1 774.2,557.1 L789.8,557.1 A7,7 0 0 0 789.8,543.1 L785.5,543.1 L785.5,549.9 Z" fill="url(#gUndo)" stroke="#2a6ae8" stroke-width="1.1" stroke-linejoin="round"/>
<path d="M843.76,553.54 L834.24,563.06 L820.76,563.06 L811.24,553.54 L811.24,540.06 L820.76,530.54 L834.24,530.54 L843.76,540.06 Z" fill="#e02828" stroke="#c02020" stroke-width="0.6"/>
<path d="M842.00,552.81 L833.51,561.30 L821.49,561.30 L813.00,552.81 L813.00,540.79 L821.49,532.30 L833.51,532.30 L842.00,540.79 Z" fill="url(#gStop)" stroke="#f07070" stroke-width="0.5"/>
<path d="M882.4,546.6 L852.8,529.9 L852.8,563.2 Z" fill="url(#gTri)" stroke="#1848a8" stroke-width="1.6" stroke-linejoin="round"/>
<path d="M372.2,550.4 L372.4,560.6 L374.6,558.6 L376.6,562.8 L378.2,562 L376.3,558 L379.3,557.8 Z" fill="#2a2a2a" stroke="#5a5a5a" stroke-width="0.4"/>
<g clip-path="url(#cvclip)">
<rect x="296.5" y="61.5" width="95.8" height="96" rx="23" fill="none" stroke="#000" stroke-width="1.7"/>
<circle cx="316.4" cy="81.7" r="8.2" fill="none" stroke="#000" stroke-width="1.6"/>
<path d="M311.9,87.2 l1,2.8 l1.8,-1.5" fill="none" stroke="#000" stroke-width="1.1"/>
<circle cx="372.0" cy="81.7" r="8.2" fill="none" stroke="#000" stroke-width="1.6"/>
<path d="M367.5,87.2 l1,2.8 l1.8,-1.5" fill="none" stroke="#000" stroke-width="1.1"/>
<circle cx="316.4" cy="136.9" r="8.2" fill="none" stroke="#000" stroke-width="1.6"/>
<path d="M311.9,142.4 l1,2.8 l1.8,-1.5" fill="none" stroke="#000" stroke-width="1.1"/>
<circle cx="372.0" cy="136.9" r="8.2" fill="none" stroke="#000" stroke-width="1.6"/>
<path d="M367.5,142.4 l1,2.8 l1.8,-1.5" fill="none" stroke="#000" stroke-width="1.1"/>
<circle cx="344.1" cy="109.5" r="22.1" fill="none" stroke="#000" stroke-width="1.6"/>
<path d="M340.5,128.0 l1.2,3.2 l2.2,-1.8 M346.5,130.5 l1.6,-2.5" fill="none" stroke="#000" stroke-width="1.1"/>
<rect x="401.3" y="61.5" width="95.8" height="96" rx="23" fill="none" stroke="#000" stroke-width="1.7"/>
<circle cx="421.2" cy="81.7" r="8.2" fill="none" stroke="#000" stroke-width="1.6"/>
<path d="M416.7,87.2 l1,2.8 l1.8,-1.5" fill="none" stroke="#000" stroke-width="1.1"/>
<circle cx="476.8" cy="81.7" r="8.2" fill="none" stroke="#000" stroke-width="1.6"/>
<path d="M472.3,87.2 l1,2.8 l1.8,-1.5" fill="none" stroke="#000" stroke-width="1.1"/>
<circle cx="421.2" cy="136.9" r="8.2" fill="none" stroke="#000" stroke-width="1.6"/>
<path d="M416.7,142.4 l1,2.8 l1.8,-1.5" fill="none" stroke="#000" stroke-width="1.1"/>
<circle cx="476.8" cy="136.9" r="8.2" fill="none" stroke="#000" stroke-width="1.6"/>
<path d="M472.3,142.4 l1,2.8 l1.8,-1.5" fill="none" stroke="#000" stroke-width="1.1"/>
<circle cx="448.9" cy="109.5" r="22.1" fill="none" stroke="#000" stroke-width="1.6"/>
<path d="M445.3,128.0 l1.2,3.2 l2.2,-1.8 M451.3,130.5 l1.6,-2.5" fill="none" stroke="#000" stroke-width="1.1"/>
<rect x="296.6" y="168.7" width="95.8" height="96" rx="23" fill="none" stroke="#000" stroke-width="1.7"/>
<circle cx="316.5" cy="188.9" r="8.2" fill="none" stroke="#000" stroke-width="1.6"/>
<path d="M312.0,194.4 l1,2.8 l1.8,-1.5" fill="none" stroke="#000" stroke-width="1.1"/>
<circle cx="372.1" cy="188.9" r="8.2" fill="none" stroke="#000" stroke-width="1.6"/>
<path d="M367.6,194.4 l1,2.8 l1.8,-1.5" fill="none" stroke="#000" stroke-width="1.1"/>
<circle cx="316.5" cy="244.1" r="8.2" fill="none" stroke="#000" stroke-width="1.6"/>
<path d="M312.0,249.6 l1,2.8 l1.8,-1.5" fill="none" stroke="#000" stroke-width="1.1"/>
<circle cx="372.1" cy="244.1" r="8.2" fill="none" stroke="#000" stroke-width="1.6"/>
<path d="M367.6,249.6 l1,2.8 l1.8,-1.5" fill="none" stroke="#000" stroke-width="1.1"/>
<circle cx="344.2" cy="216.7" r="22.1" fill="none" stroke="#000" stroke-width="1.6"/>
<path d="M340.6,235.2 l1.2,3.2 l2.2,-1.8 M346.6,237.7 l1.6,-2.5" fill="none" stroke="#000" stroke-width="1.1"/>
<rect x="401.5" y="168.7" width="95.8" height="96" rx="23" fill="none" stroke="#000" stroke-width="1.7"/>
<circle cx="421.4" cy="188.9" r="8.2" fill="none" stroke="#000" stroke-width="1.6"/>
<path d="M416.9,194.4 l1,2.8 l1.8,-1.5" fill="none" stroke="#000" stroke-width="1.1"/>
<circle cx="477.0" cy="188.9" r="8.2" fill="none" stroke="#000" stroke-width="1.6"/>
<path d="M472.5,194.4 l1,2.8 l1.8,-1.5" fill="none" stroke="#000" stroke-width="1.1"/>
<circle cx="421.4" cy="244.1" r="8.2" fill="none" stroke="#000" stroke-width="1.6"/>
<path d="M416.9,249.6 l1,2.8 l1.8,-1.5" fill="none" stroke="#000" stroke-width="1.1"/>
<circle cx="477.0" cy="244.1" r="8.2" fill="none" stroke="#000" stroke-width="1.6"/>
<path d="M472.5,249.6 l1,2.8 l1.8,-1.5" fill="none" stroke="#000" stroke-width="1.1"/>
<circle cx="449.1" cy="216.7" r="22.1" fill="none" stroke="#000" stroke-width="1.6"/>
<path d="M445.5,235.2 l1.2,3.2 l2.2,-1.8 M451.5,237.7 l1.6,-2.5" fill="none" stroke="#000" stroke-width="1.1"/>
<line x1="320.6" y1="85.4" x2="364.7" y2="85.4" stroke="#c4e2da" stroke-width="0.65" fill="none" opacity="0.85"/>
<line x1="311.9" y1="88.5" x2="321.3" y2="141" stroke="#c4e2da" stroke-width="0.65" fill="none" opacity="0.85"/>
<line x1="376.7" y1="84.9" x2="368.3" y2="141" stroke="#c4e2da" stroke-width="0.65" fill="none" opacity="0.85"/>
<line x1="324.2" y1="137.7" x2="348.8" y2="127.6" stroke="#c4e2da" stroke-width="0.65" fill="none" opacity="0.85"/>
<line x1="343" y1="127.6" x2="391.5" y2="138.1" stroke="#c4e2da" stroke-width="0.65" fill="none" opacity="0.85"/>
<line x1="391.5" y1="138.1" x2="420" y2="141" stroke="#c4e2da" stroke-width="0.65" fill="none" opacity="0.85"/>
<line x1="426.2" y1="85.4" x2="469.6" y2="85.4" stroke="#c4e2da" stroke-width="0.65" fill="none" opacity="0.85"/>
<line x1="416.8" y1="88.5" x2="426.2" y2="141" stroke="#c4e2da" stroke-width="0.65" fill="none" opacity="0.85"/>
<line x1="481.6" y1="85" x2="472.9" y2="141" stroke="#c4e2da" stroke-width="0.65" fill="none" opacity="0.85"/>
<line x1="428.4" y1="137.7" x2="454.1" y2="126.9" stroke="#c4e2da" stroke-width="0.65" fill="none" opacity="0.85"/>
<line x1="446.5" y1="131.9" x2="449" y2="141" stroke="#c4e2da" stroke-width="0.65" fill="none" opacity="0.85"/>
<line x1="321.2" y1="191.6" x2="363.6" y2="191.6" stroke="#c4e2da" stroke-width="0.65" fill="none" opacity="0.85"/>
<line x1="312.4" y1="196" x2="320.5" y2="247.9" stroke="#c4e2da" stroke-width="0.65" fill="none" opacity="0.85"/>
<line x1="376.8" y1="191.6" x2="367.3" y2="247.2" stroke="#c4e2da" stroke-width="0.65" fill="none" opacity="0.85"/>
<line x1="283.2" y1="247.9" x2="338.7" y2="234" stroke="#c4e2da" stroke-width="0.65" fill="none" opacity="0.85"/>
<line x1="312.4" y1="247.9" x2="348.2" y2="234" stroke="#c4e2da" stroke-width="0.65" fill="none" opacity="0.85"/>
<line x1="376.8" y1="247.9" x2="392" y2="258" stroke="#c4e2da" stroke-width="0.65" fill="none" opacity="0.85"/>
<line x1="384" y1="263.2" x2="420" y2="246" stroke="#c4e2da" stroke-width="0.65" fill="none" opacity="0.85"/>
<line x1="426.7" y1="191.6" x2="469.1" y2="191.6" stroke="#c4e2da" stroke-width="0.65" fill="none" opacity="0.85"/>
<line x1="417.2" y1="196" x2="425.2" y2="247.9" stroke="#c4e2da" stroke-width="0.65" fill="none" opacity="0.85"/>
<line x1="481.5" y1="191.6" x2="472.5" y2="247.2" stroke="#c4e2da" stroke-width="0.65" fill="none" opacity="0.85"/>
<line x1="385" y1="263.2" x2="453.7" y2="233.3" stroke="#c4e2da" stroke-width="0.65" fill="none" opacity="0.85"/>
<line x1="416.4" y1="247.2" x2="445" y2="235.5" stroke="#c4e2da" stroke-width="0.65" fill="none" opacity="0.85"/>
<line x1="462" y1="185" x2="489.6" y2="264" stroke="#c4e2da" stroke-width="0.65" fill="none" opacity="0.85"/>
<line x1="481.5" y1="247.9" x2="492.5" y2="255.2" stroke="#c4e2da" stroke-width="0.65" fill="none" opacity="0.85"/>
<line x1="345.3" y1="209.1" x2="350.5" y2="204" stroke="#e8f0f0" stroke-width="1"/>
<g transform="translate(352.5,202) rotate(-40)"><rect x="-3.2" y="-2" width="6.4" height="4" rx="1.5" fill="#ee1818"/><rect x="2.5" y="-3" width="1.8" height="6" rx="0.8" fill="#ff3030"/><rect x="-1.5" y="-1.2" width="2.5" height="1" fill="#ff9090"/></g>
<line x1="285" y1="246" x2="291.2" y2="236.2" stroke="#3a3a3a" stroke-width="2.2"/><line x1="285.5" y1="245.5" x2="290.5" y2="237.5" stroke="#aaa" stroke-width="0.7"/>
<path d="M283.2,240 L283.9,247 L290.5,247.9 L283.9,248.8 L283.2,254 L282.5,248.8 L277,247.9 L282.5,247 Z" fill="#ffffff" opacity="0.9"/>
<line x1="278.5" y1="243.5" x2="288" y2="252.5" stroke="#e8f8f8" stroke-width="0.6"/><line x1="288" y1="243.5" x2="278.5" y2="252.5" stroke="#e8f8f8" stroke-width="0.6"/><circle cx="283.2" cy="247.9" r="1.6" fill="#fff"/>
<line x1="286" y1="248" x2="294.5" y2="248" stroke="#2a2a2a" stroke-width="0.8"/>
</g>
<rect x="89" y="138.3" width="602" height="48.4" fill="#ebe3d3"/></svg>
<div class="t" style="left:766.68px;top:29.21px;font-size:13.04px;font-weight:normal;font-style:normal;color:#2a2a2a;transform:scaleX(0.9892);transform-origin:0 0;">X</div>
<div class="t" style="left:766.68px;top:70.21px;font-size:13.04px;font-weight:normal;font-style:normal;color:#2a2a2a;transform:scaleX(0.9892);transform-origin:0 0;">Y</div>
<div class="t" style="left:766.56px;top:111.21px;font-size:13.04px;font-weight:normal;font-style:normal;color:#2a2a2a;transform:scaleX(1.1152);transform-origin:0 0;">Z</div>
<div class="t" style="left:796.29px;top:19.69px;font-size:14.71px;font-weight:bold;font-style:normal;color:#ff0000;transform:scaleX(1.0292);transform-origin:0 0;-webkit-text-stroke:0.3px #ff0000;">-29.656</div>
<div class="t" style="left:815.42px;top:36.24px;font-size:9.71px;font-weight:bold;font-style:normal;color:#ececec;transform:scaleX(0.9720);transform-origin:0 0;-webkit-text-stroke:0.3px #ececec;">-29.656</div>
<div class="t" style="left:800.84px;top:60.69px;font-size:14.71px;font-weight:bold;font-style:normal;color:#ff0000;transform:scaleX(1.0292);transform-origin:0 0;-webkit-text-stroke:0.3px #ff0000;">34.744</div>
<div class="t" style="left:818.25px;top:77.24px;font-size:9.71px;font-weight:bold;font-style:normal;color:#ececec;transform:scaleX(0.9720);transform-origin:0 0;-webkit-text-stroke:0.3px #ececec;">34.744</div>
<div class="t" style="left:809.85px;top:101.69px;font-size:14.71px;font-weight:bold;font-style:normal;color:#ff0000;transform:scaleX(1.0292);transform-origin:0 0;-webkit-text-stroke:0.3px #ff0000;">0.000</div>
<div class="t" style="left:823.87px;top:118.24px;font-size:9.71px;font-weight:bold;font-style:normal;color:#ececec;transform:scaleX(0.9720);transform-origin:0 0;-webkit-text-stroke:0.3px #ececec;">0.000</div>
<div class="t" style="left:851.54px;top:24.11px;font-size:22.46px;font-weight:bold;font-style:italic;color:#3a8cf8;transform:scaleX(0.7612);transform-origin:0 0;-webkit-text-stroke:0.8px #3a8cf8;">SET</div>
<div class="t" style="left:851.54px;top:65.11px;font-size:22.46px;font-weight:bold;font-style:italic;color:#3a8cf8;transform:scaleX(0.7612);transform-origin:0 0;-webkit-text-stroke:0.8px #3a8cf8;">SET</div>
<div class="t" style="left:851.54px;top:106.11px;font-size:22.46px;font-weight:bold;font-style:italic;color:#3a8cf8;transform:scaleX(0.7612);transform-origin:0 0;-webkit-text-stroke:0.8px #3a8cf8;">SET</div>
<div class="t" style="left:768.94px;top:196.15px;font-size:11.00px;font-weight:bold;font-style:normal;color:#1010ee;transform:scaleX(1.4009);transform-origin:0 0;-webkit-text-stroke:0.1px #1010ee;">88.88</div>
<div class="t" style="left:694.80px;top:286.22px;font-size:9.28px;font-weight:bold;font-style:normal;color:#00d8dc;transform:scaleX(1.0694);transform-origin:0 0;-webkit-text-stroke:0.3px #00d8dc;">G54</div>
<div class="t" style="left:724.98px;top:317.30px;font-size:8.00px;font-weight:bold;font-style:normal;color:#2a2a2a;transform:scaleX(1.0000);transform-origin:0 0;-webkit-text-stroke:0.3px #2a2a2a;">Jog over</div>
<div class="t" style="left:724.82px;top:326.30px;font-size:8.00px;font-weight:bold;font-style:normal;color:#2a2a2a;transform:scaleX(1.0000);transform-origin:0 0;-webkit-text-stroke:0.3px #2a2a2a;">speed</div>
<div class="t" style="left:724.86px;top:348.50px;font-size:8.00px;font-weight:bold;font-style:normal;color:#2a2a2a;transform:scaleX(1.0000);transform-origin:0 0;-webkit-text-stroke:0.3px #2a2a2a;">Speed,</div>
<div class="t" style="left:724.58px;top:357.70px;font-size:8.00px;font-weight:bold;font-style:normal;color:#2a2a2a;transform:scaleX(1.0000);transform-origin:0 0;-webkit-text-stroke:0.3px #2a2a2a;">mm/min</div>
<div class="t" style="left:724.78px;top:379.50px;font-size:8.00px;font-weight:bold;font-style:normal;color:#2a2a2a;transform:scaleX(1.0000);transform-origin:0 0;-webkit-text-stroke:0.3px #2a2a2a;">Over</div>
<div class="t" style="left:724.86px;top:388.50px;font-size:8.00px;font-weight:bold;font-style:normal;color:#2a2a2a;transform:scaleX(1.0000);transform-origin:0 0;-webkit-text-stroke:0.3px #2a2a2a;">Speed</div>
<div class="t" style="left:813.14px;top:321.96px;font-size:8.99px;font-weight:bold;font-style:normal;color:#00d8dc;transform:scaleX(1.2321);transform-origin:0 0;-webkit-text-stroke:0.3px #00d8dc;">100%</div>
<div class="t" style="left:822.50px;top:350.71px;font-size:13.29px;font-weight:bold;font-style:normal;color:#00a000;transform:scaleX(1.3152);transform-origin:0 0;-webkit-text-stroke:0.3px #00a000;">0</div>
<div class="t" style="left:816.68px;top:383.65px;font-size:9.71px;font-weight:bold;font-style:normal;color:#00d8dc;transform:scaleX(1.1119);transform-origin:0 0;-webkit-text-stroke:0.3px #00d8dc;">50%</div>
<div class="t" style="left:97.99px;top:36.13px;font-size:10.43px;font-weight:bold;font-style:italic;color:#3a8cf8;transform:scaleX(0.9886);transform-origin:0 0;-webkit-text-stroke:0.7px #3a8cf8;">HPGL</div>
<div class="t" style="left:97.98px;top:45.28px;font-size:10.14px;font-weight:bold;font-style:italic;color:#3a8cf8;transform:scaleX(1.0744);transform-origin:0 0;-webkit-text-stroke:0.7px #3a8cf8;">DXF</div>
<div class="t" style="left:156.32px;top:528.38px;font-size:8.26px;font-weight:bold;font-style:normal;color:#1e1e1e;transform:scaleX(1.0000);transform-origin:0 0;-webkit-text-stroke:0.3px #1e1e1e;">Home Y1</div>
<div class="a" style="left:191.6px;top:526.4px;width:9.700000000000017px;height:9.5px;border-radius:1.5px;background:linear-gradient(#e4e4e4,#b0b0b0 45%,#a8a8a8 60%,#c8c8c8);box-shadow:inset 0 0 0 0.6px rgba(80,80,80,0.35);"></div>
<div class="t" style="left:156.44px;top:538.68px;font-size:8.26px;font-weight:bold;font-style:normal;color:#1e1e1e;transform:scaleX(1.0000);transform-origin:0 0;-webkit-text-stroke:0.3px #1e1e1e;">Home Y2</div>
<div class="a" style="left:191.6px;top:536.6999999999999px;width:9.700000000000017px;height:9.5px;border-radius:1.5px;background:linear-gradient(#e4e4e4,#b0b0b0 45%,#a8a8a8 60%,#c8c8c8);box-shadow:inset 0 0 0 0.6px rgba(80,80,80,0.35);"></div>
<div class="t" style="left:160.65px;top:548.98px;font-size:8.26px;font-weight:bold;font-style:normal;color:#1e1e1e;transform:scaleX(1.0000);transform-origin:0 0;-webkit-text-stroke:0.3px #1e1e1e;">Home X</div>
<div class="a" style="left:191.6px;top:547.0px;width:9.700000000000017px;height:9.5px;border-radius:1.5px;background:linear-gradient(#e4e4e4,#b0b0b0 45%,#a8a8a8 60%,#c8c8c8);box-shadow:inset 0 0 0 0.6px rgba(80,80,80,0.35);"></div>
<div class="t" style="left:161.23px;top:559.08px;font-size:8.26px;font-weight:bold;font-style:normal;color:#1e1e1e;transform:scaleX(1.0000);transform-origin:0 0;-webkit-text-stroke:0.3px #1e1e1e;">Home Z</div>
<div class="a" style="left:191.6px;top:557.1px;width:9.700000000000017px;height:9.5px;border-radius:1.5px;background:linear-gradient(#e4e4e4,#b0b0b0 45%,#a8a8a8 60%,#c8c8c8);box-shadow:inset 0 0 0 0.6px rgba(80,80,80,0.35);"></div>
<div class="t" style="left:207.42px;top:528.38px;font-size:8.26px;font-weight:bold;font-style:normal;color:#1e1e1e;transform:scaleX(1.0000);transform-origin:0 0;-webkit-text-stroke:0.3px #1e1e1e;">Plasma Power</div>
<div class="a" style="left:263.6px;top:526.4px;width:9.599999999999966px;height:9.5px;border-radius:1.5px;background:linear-gradient(#e4e4e4,#b0b0b0 45%,#a8a8a8 60%,#c8c8c8);box-shadow:inset 0 0 0 0.6px rgba(80,80,80,0.35);"></div>
<div class="t" style="left:219.35px;top:538.68px;font-size:8.26px;font-weight:bold;font-style:normal;color:#1e1e1e;transform:scaleX(1.0000);transform-origin:0 0;-webkit-text-stroke:0.3px #1e1e1e;">Arc Sensor</div>
<div class="a" style="left:263.6px;top:536.6999999999999px;width:9.599999999999966px;height:9.5px;border-radius:1.5px;background:linear-gradient(#b0f890,#50c838 50%,#40b830 60%,#70d860);box-shadow:inset 0 0 0 0.6px rgba(80,80,80,0.35);"></div>
<div class="t" style="left:235.79px;top:548.98px;font-size:8.26px;font-weight:bold;font-style:normal;color:#1e1e1e;transform:scaleX(1.0000);transform-origin:0 0;-webkit-text-stroke:0.3px #1e1e1e;">IHC On</div>
<div class="a" style="left:263.6px;top:547.0px;width:9.599999999999966px;height:9.5px;border-radius:1.5px;background:linear-gradient(#e4e4e4,#b0b0b0 45%,#a8a8a8 60%,#c8c8c8);box-shadow:inset 0 0 0 0.6px rgba(80,80,80,0.35);"></div>
<div class="t" style="left:218.90px;top:559.08px;font-size:8.26px;font-weight:bold;font-style:normal;color:#1e1e1e;transform:scaleX(1.0000);transform-origin:0 0;-webkit-text-stroke:0.3px #1e1e1e;">IHC Sensor</div>
<div class="a" style="left:263.6px;top:557.1px;width:9.599999999999966px;height:9.5px;border-radius:1.5px;background:linear-gradient(#e4e4e4,#b0b0b0 45%,#a8a8a8 60%,#c8c8c8);box-shadow:inset 0 0 0 0.6px rgba(80,80,80,0.35);"></div>
<div class="t" style="left:331.23px;top:528.38px;font-size:8.26px;font-weight:bold;font-style:normal;color:#1e1e1e;transform:scaleX(1.0000);transform-origin:0 0;-webkit-text-stroke:0.3px #1e1e1e;">THC</div>
<div class="a" style="left:349.5px;top:526.4px;width:8.899999999999977px;height:9.5px;border-radius:1.5px;background:linear-gradient(#c0c0ff,#7070e8 50%,#6060d8 60%,#8888f0);box-shadow:inset 0 0 0 0.6px rgba(80,80,80,0.35);"></div>
<div class="t" style="left:285.67px;top:538.68px;font-size:8.26px;font-weight:bold;font-style:normal;color:#1e1e1e;transform:scaleX(1.0000);transform-origin:0 0;-webkit-text-stroke:0.3px #1e1e1e;">THC Low Speed</div>
<div class="a" style="left:349.5px;top:536.6999999999999px;width:8.899999999999977px;height:9.5px;border-radius:1.5px;background:linear-gradient(#ffb0b8,#f05868 50%,#e04858 60%,#f07888);box-shadow:inset 0 0 0 0.6px rgba(80,80,80,0.35);"></div>
<div class="t" style="left:393.85px;top:528.38px;font-size:8.26px;font-weight:bold;font-style:normal;color:#1e1e1e;transform:scaleX(1.0000);transform-origin:0 0;-webkit-text-stroke:0.3px #1e1e1e;">Drill Down</div>
<div class="a" style="left:434.9px;top:526.4px;width:9.100000000000023px;height:9.5px;border-radius:1.5px;background:linear-gradient(#ffb0b8,#f05868 50%,#e04858 60%,#f07888);box-shadow:inset 0 0 0 0.6px rgba(80,80,80,0.35);"></div>
<div class="t" style="left:391.16px;top:538.68px;font-size:8.26px;font-weight:bold;font-style:normal;color:#1e1e1e;transform:scaleX(1.0000);transform-origin:0 0;-webkit-text-stroke:0.3px #1e1e1e;">Drill Power</div>
<div class="a" style="left:434.9px;top:536.6999999999999px;width:9.100000000000023px;height:9.5px;border-radius:1.5px;background:linear-gradient(#e4e4e4,#b0b0b0 45%,#a8a8a8 60%,#c8c8c8);box-shadow:inset 0 0 0 0.6px rgba(80,80,80,0.35);"></div>
<div class="t" style="left:725.10px;top:424.55px;font-size:9.71px;font-weight:bold;font-style:normal;color:#1e1e1e;transform:scaleX(0.8399);transform-origin:0 0;-webkit-text-stroke:0.3px #1e1e1e;">Arc Ref, V</div>
<div class="t" style="left:725.09px;top:452.28px;font-size:8.26px;font-weight:bold;font-style:normal;color:#1e1e1e;transform:scaleX(1.0000);transform-origin:0 0;-webkit-text-stroke:0.3px #1e1e1e;">Arc Reference</div>
<div class="t" style="left:725.09px;top:461.38px;font-size:8.26px;font-weight:bold;font-style:normal;color:#1e1e1e;transform:scaleX(1.0000);transform-origin:0 0;-webkit-text-stroke:0.3px #1e1e1e;">Adjustment, V</div>
<div class="t" style="left:725.09px;top:477.48px;font-size:8.26px;font-weight:bold;font-style:normal;color:#1e1e1e;transform:scaleX(1.0000);transform-origin:0 0;-webkit-text-stroke:0.3px #1e1e1e;">Arc Voltage, V</div>
<div class="t" style="left:725.21px;top:497.17px;font-size:9.57px;font-weight:bold;font-style:normal;color:#1e1e1e;transform:scaleX(0.9183);transform-origin:0 0;-webkit-text-stroke:0.3px #1e1e1e;">THC Speed</div>
<div class="t" style="left:812.82px;top:425.77px;font-size:8.86px;font-weight:bold;font-style:normal;color:#00d8dc;transform:scaleX(1.2883);transform-origin:0 0;-webkit-text-stroke:0.3px #00d8dc;">137.8</div>
<div class="t" style="left:832.70px;top:454.94px;font-size:12.43px;font-weight:bold;font-style:normal;color:#30e8f0;transform:scaleX(1.4130);transform-origin:0 0;-webkit-text-stroke:0.3px #30e8f0;">-6.0</div>
<div class="t" style="left:840.29px;top:475.84px;font-size:12.43px;font-weight:bold;font-style:normal;color:#ff1010;transform:scaleX(1.4188);transform-origin:0 0;-webkit-text-stroke:0.3px #ff1010;">0.0</div>
<div class="t" style="left:840.29px;top:496.26px;font-size:12.29px;font-weight:bold;font-style:normal;color:#20e8f0;transform:scaleX(1.4353);transform-origin:0 0;-webkit-text-stroke:0.3px #20e8f0;">0.0</div>
<div class="t" style="left:147.93px;top:271.01px;font-size:21.16px;font-weight:bold;font-style:italic;color:#3a8cf8;transform:scaleX(0.7472);transform-origin:0 0;-webkit-text-stroke:0.8px #3a8cf8;">#N</div>
<div class="t" style="left:375.07px;top:294.27px;font-size:15.22px;font-weight:bold;font-style:italic;color:#3a8cf8;transform:scaleX(0.9542);transform-origin:0 0;-webkit-text-stroke:0.6px #3a8cf8;">G54</div>
<div class="t" style="left:567.07px;top:294.27px;font-size:15.22px;font-weight:bold;font-style:italic;color:#3a8cf8;transform:scaleX(0.9542);transform-origin:0 0;-webkit-text-stroke:0.6px #3a8cf8;">G54</div>
<div class="t" style="left:608.09px;top:294.27px;font-size:15.22px;font-weight:bold;font-style:italic;color:#3a8cf8;transform:scaleX(0.9388);transform-origin:0 0;-webkit-text-stroke:0.6px #3a8cf8;">G55</div>
<div class="t" style="left:649.08px;top:294.27px;font-size:15.22px;font-weight:bold;font-style:italic;color:#3a8cf8;transform:scaleX(0.9439);transform-origin:0 0;-webkit-text-stroke:0.6px #3a8cf8;">G56</div>
<div class="t" style="left:735.12px;top:266.23px;font-size:16.32px;font-weight:bold;font-style:italic;color:#0a0a8a;transform:scaleX(1.0219);transform-origin:0 0;font-family:'Liberation Serif',serif;-webkit-text-stroke:0.3px #0a0a8a;">0.1</div>
<div class="t" style="left:320.49px;top:145.35px;font-size:9.71px;font-weight:bold;font-style:italic;color:#1a1a1a;transform:scaleX(1.0764);transform-origin:0 0;-webkit-text-stroke:0.45px #1a1a1a;">Emergency Button pressed.</div>
<div class="t" style="left:775.88px;top:266.23px;font-size:16.32px;font-weight:bold;font-style:italic;color:#0a0a8a;transform:scaleX(1.0227);transform-origin:0 0;font-family:'Liberation Serif',serif;-webkit-text-stroke:0.3px #0a0a8a;">1.0</div>
<div class="t" style="left:811.77px;top:266.14px;font-size:16.18px;font-weight:bold;font-style:italic;color:#0a0a8a;transform:scaleX(1.0087);transform-origin:0 0;font-family:'Liberation Serif',serif;-webkit-text-stroke:0.3px #0a0a8a;">SET</div>
<svg class="a" style="left:0;top:0" width="900" height="581"><path d="M868.3,275.2 C866.5,272 861.2,272 861.2,275.2 C861.2,278.4 866.5,278.4 868.3,275.2 C870.1,272 875.4,272 875.4,275.2 C875.4,278.4 870.1,278.4 868.3,275.2 Z" fill="none" stroke="#0a0a8a" stroke-width="2.2"/></svg>
<div class="t" style="left:814.72px;top:541.95px;font-size:12.17px;font-weight:bold;font-style:normal;color:#f8f0f0;transform:scaleX(0.7702);transform-origin:0 0;-webkit-text-stroke:0px #fff;">STOP</div>
<div class="t" style="left:119.83px;top:556.14px;font-size:9.13px;font-weight:bold;font-style:normal;color:#2848b0;transform:scaleX(0.7856);transform-origin:0 0;-webkit-text-stroke:0px #000;">XYZ</div>
<div class="t" style="left:703.99px;top:414.02px;font-size:7.97px;font-weight:bold;font-style:italic;color:#4a90f0;transform:scaleX(0.9104);transform-origin:0 0;-webkit-text-stroke:0.5px #4a90f0;">x10</div>
<div class="t" style="left:703.99px;top:517.02px;font-size:7.97px;font-weight:bold;font-style:italic;color:#4a90f0;transform:scaleX(0.9104);transform-origin:0 0;-webkit-text-stroke:0.5px #4a90f0;">x10</div>
<div class="t" style="left:753.18px;top:40.48px;font-size:14.49px;font-weight:normal;font-style:normal;color:#1a40b0;transform:scaleX(0.8903);transform-origin:0 0;">X</div>
<div class="t" style="left:753.18px;top:81.48px;font-size:14.49px;font-weight:normal;font-style:normal;color:#1a40b0;transform:scaleX(0.8903);transform-origin:0 0;">Y</div>
<div class="t" style="left:753.06px;top:122.48px;font-size:14.49px;font-weight:normal;font-style:normal;color:#1a40b0;transform:scaleX(1.0036);transform-origin:0 0;">Z</div>
<div class="a" style="left:714px;top:396px;width:185px;height:127px;box-sizing:border-box;border:7.5px solid #a2a200;border-radius:3px;"></div>
</body></html>
